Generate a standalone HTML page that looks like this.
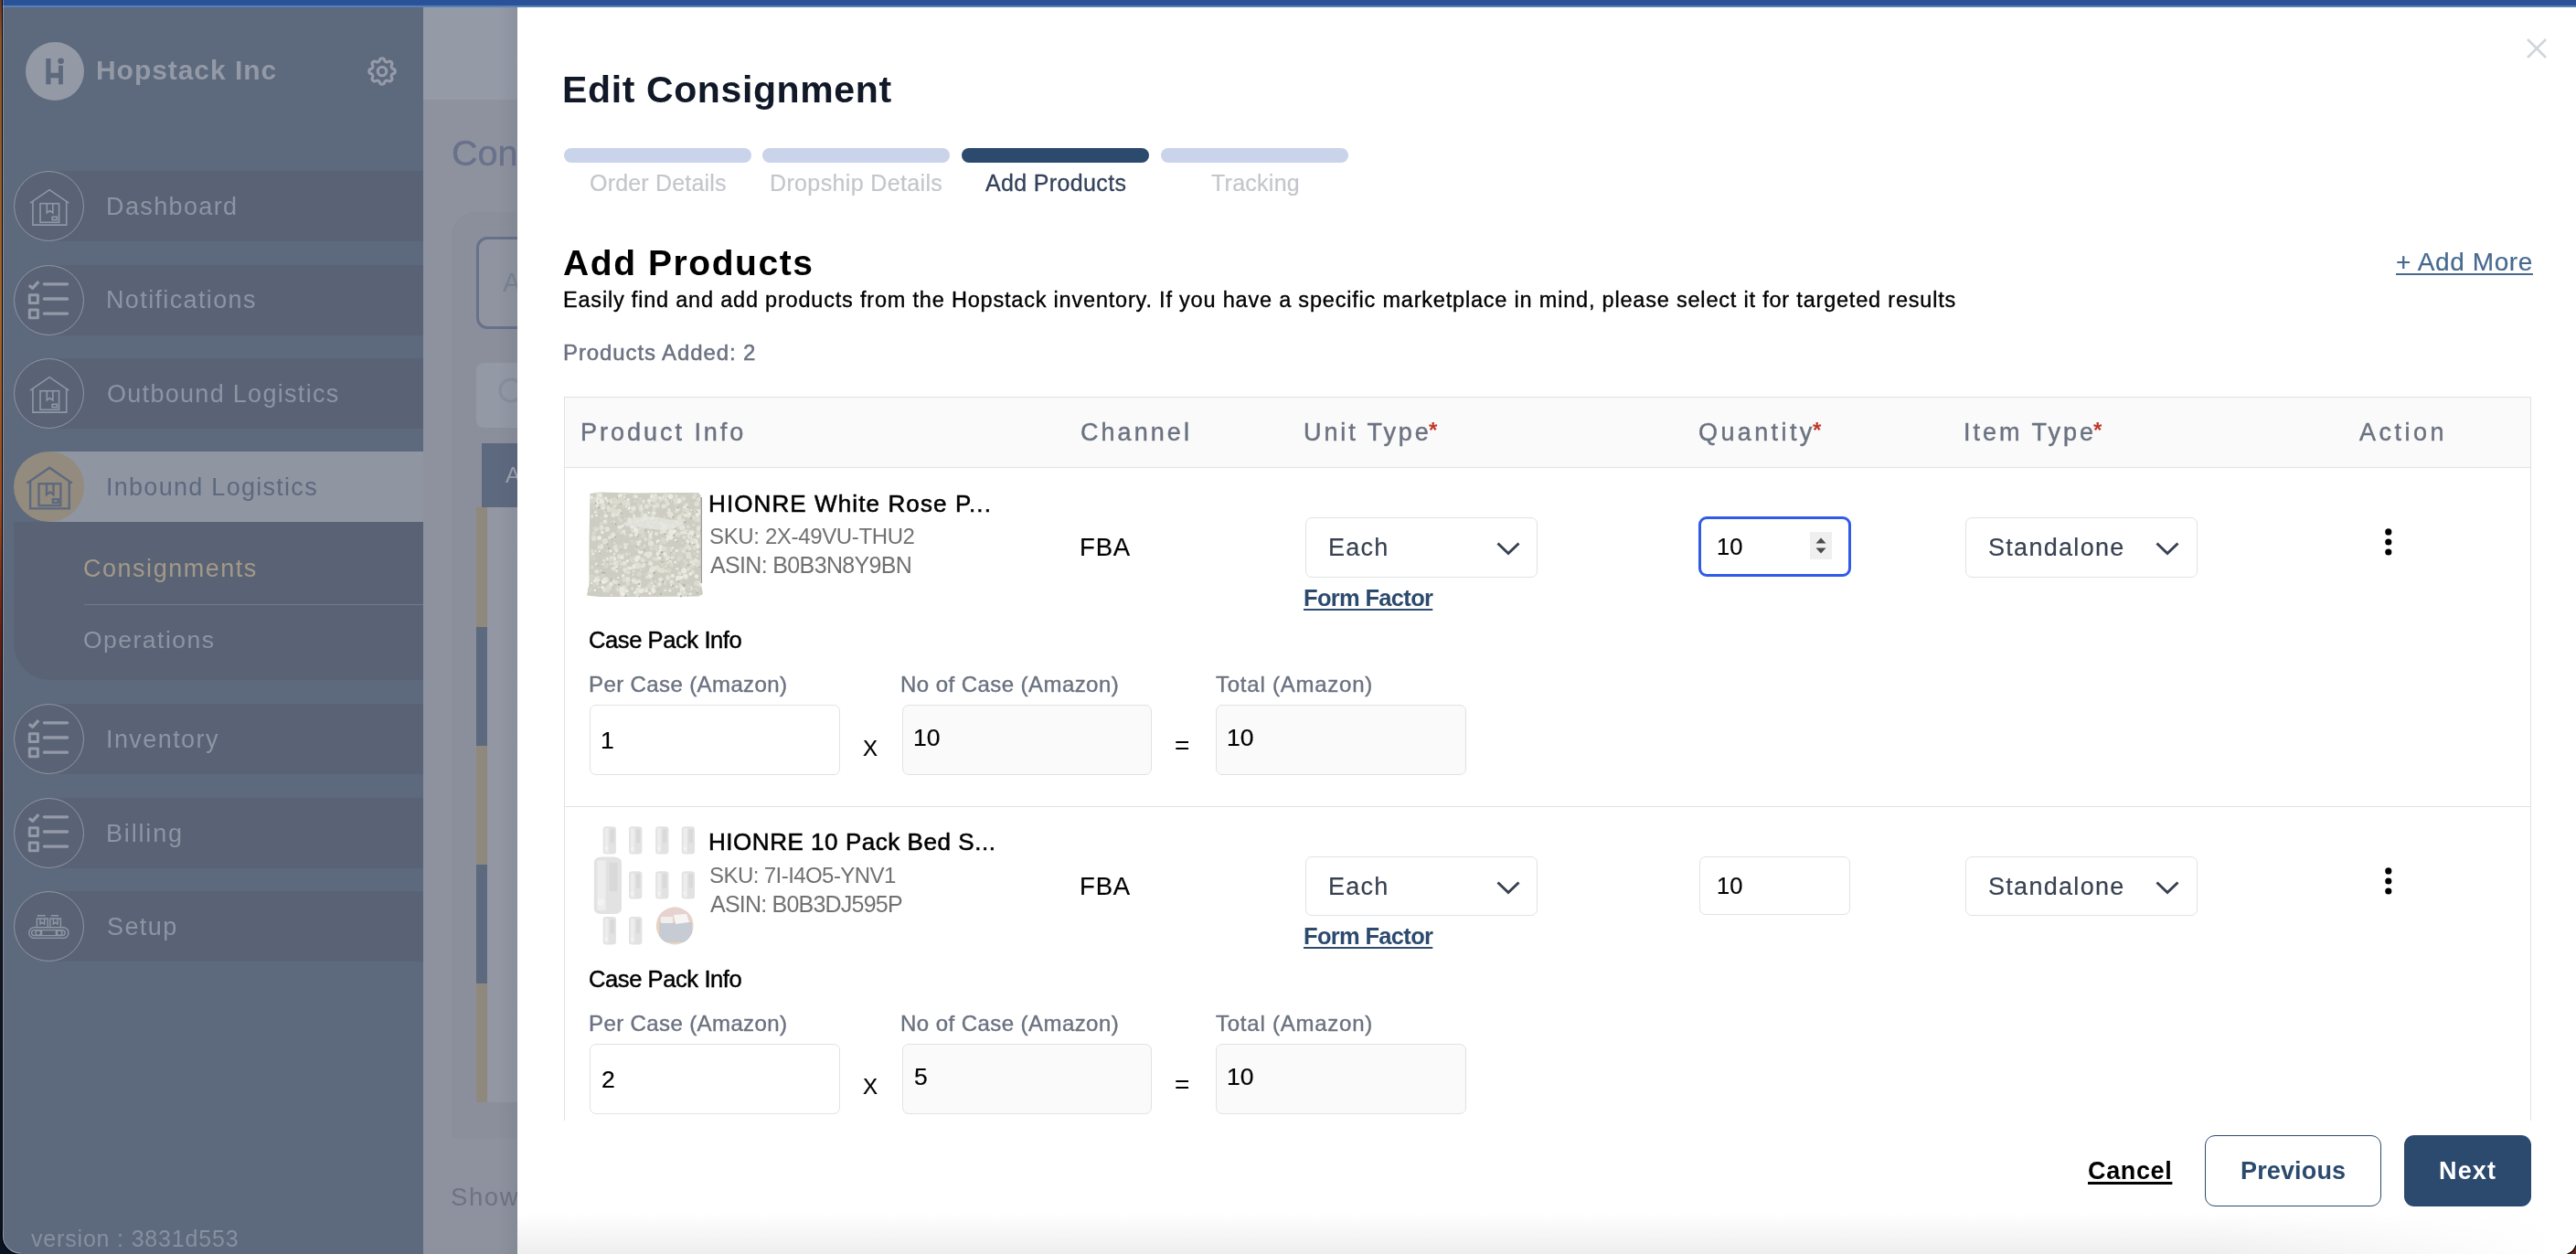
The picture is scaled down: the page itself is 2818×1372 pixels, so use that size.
<!DOCTYPE html>
<html lang="en"><head><meta charset="utf-8"><title>Edit Consignment</title>
<style>
html,body{margin:0;padding:0;}
body{width:2818px;height:1372px;position:relative;overflow:hidden;background:#8E929F;font-family:"Liberation Sans",sans-serif;}
#root{position:absolute;left:0;top:0;width:2818px;height:1372px;opacity:.999;}
.a{position:absolute;box-sizing:border-box;}
.t{position:absolute;white-space:nowrap;will-change:transform;}
svg{position:absolute;overflow:visible;}
</style></head><body><div id="root">
<div class="a" style="left:0.0px;top:0.0px;width:2818.0px;height:6.0px;background:#2A5298;"></div>
<div class="a" style="left:0.0px;top:6.0px;width:2818.0px;height:2.0px;background:#5580BA;"></div>
<div class="a" style="left:463.0px;top:8.0px;width:120.0px;height:101.0px;background:#959AA7;"></div>
<div class="a" style="left:463.0px;top:109.0px;width:120.0px;height:1263.0px;background:#8E929F;"></div>
<span class="t" style="left:493.8px;top:148.3px;font-size:39.5px;line-height:39.5px;color:#68728A;-webkit-text-stroke:0.5px #68728A;">Consignments</span>
<div class="a" style="left:495.0px;top:232.0px;width:200.0px;height:1014.0px;background:#8B8F9C;border-radius:25px 0 0 4px;border-left:1px solid #878C99;"></div>
<div class="a" style="left:521.0px;top:259.0px;width:200.0px;height:101.0px;border:3px solid #66718A;border-radius:12px;background:#8F94A0;"></div>
<span class="t" style="left:550.0px;top:295.2px;font-size:29.0px;line-height:29.0px;color:#7B8293;">All</span>
<div class="a" style="left:521.0px;top:397.0px;width:200.0px;height:71.0px;background:#9499A6;border-radius:8px;"></div>
<svg style="left:545px;top:413px" width="30" height="30"><circle cx="14" cy="14" r="12" fill="none" stroke="#898E9C" stroke-width="3.2"/></svg>
<div class="a" style="left:527.0px;top:484.6px;width:200.0px;height:70.2px;background:#5D697F;"></div>
<span class="t" style="left:553.0px;top:508.3px;font-size:24.5px;line-height:24.5px;color:#9EA3AF;">A</span>
<div class="a" style="left:533.0px;top:554.8px;width:100.0px;height:651.2px;background:#9297A3;"></div>
<div class="a" style="left:521.0px;top:554.8px;width:12.0px;height:130.8px;background:#8F887C;"></div>
<div class="a" style="left:521.0px;top:685.6px;width:12.0px;height:130.1px;background:#5D697F;"></div>
<div class="a" style="left:521.0px;top:815.7px;width:12.0px;height:130.3px;background:#8F887C;"></div>
<div class="a" style="left:521.0px;top:946.0px;width:12.0px;height:130.0px;background:#5D697F;"></div>
<div class="a" style="left:521.0px;top:1076.0px;width:12.0px;height:130.0px;background:#8F887C;"></div>
<span class="t" style="left:493.4px;top:1296.4px;font-size:27.5px;line-height:27.5px;color:#6D7383;letter-spacing:1.6px;">Showing</span>
<div class="a" style="left:4.0px;top:8.0px;width:459.0px;height:1364.0px;background:#5D697D;"></div>
<div class="a" style="left:0.0px;top:0.0px;width:1.5px;height:1372.0px;background:linear-gradient(#6B3A28 0,#8A5528 3%,#A0652A 25%,#9A4A20 40%,#6A1F14 50%,#3A1A16 60%,#101820 75%,#0A1420 100%);"></div>
<div class="a" style="left:1.5px;top:0.0px;width:1.0px;height:1372.0px;background:#050302;"></div>
<div class="a" style="left:2.5px;top:8.0px;width:1.5px;height:1364.0px;background:#8491A8;"></div>
<div class="a" style="left:2.5px;top:0.0px;width:1.5px;height:6.0px;background:#5B82C3;"></div>
<div class="a" style="left:2.5px;top:6.0px;width:1.5px;height:2.0px;background:#86A9DC;"></div>
<svg style="left:28px;top:46px" width="64" height="64" viewBox="0 0 64 64"><circle cx="32" cy="32" r="32" fill="#9499A6"/>
<path d="M22.3 17.9h5.2v28.3h-5.2zM36 25.8h4.9v20.4H36zM27 33.7h10v5.5H27z" fill="#5D697D"/><circle cx="38.6" cy="20.8" r="3.3" fill="#5D697D"/></svg>
<span class="t" style="left:104.8px;top:62.0px;font-size:30.0px;line-height:30.0px;color:#9499A6;font-weight:700;letter-spacing:0.95px;">Hopstack Inc</span>
<svg style="left:399px;top:59px" width="38" height="38" viewBox="0 0 24 24" fill="none" stroke="#959BA9" stroke-width="2" stroke-linecap="round" stroke-linejoin="round"><path d="M10.325 4.317c.426-1.756 2.924-1.756 3.35 0a1.724 1.724 0 002.573 1.066c1.543-.94 3.31.826 2.37 2.37a1.724 1.724 0 001.065 2.572c1.756.426 1.756 2.924 0 3.35a1.724 1.724 0 00-1.066 2.573c.94 1.543-.826 3.31-2.37 2.37a1.724 1.724 0 00-2.572 1.065c-.426 1.756-2.924 1.756-3.35 0a1.724 1.724 0 00-2.573-1.066c-1.543.94-3.31-.826-2.37-2.37a1.724 1.724 0 00-1.065-2.572c-1.756-.426-1.756-2.924 0-3.35a1.724 1.724 0 001.066-2.573c-.94-1.543.826-3.31 2.37-2.37.996.608 2.296.07 2.572-1.065z"/><path d="M15 12a3 3 0 11-6 0 3 3 0 016 0z"/></svg>
<div class="a" style="left:53.5px;top:187.0px;width:409.5px;height:77.0px;background:#5A6376;"></div>
<svg style="left:15px;top:187px" width="77" height="77" viewBox="0 0 77 77"><circle cx="38.5" cy="38.5" r="38" fill="#5A6376" stroke="#9096A4" stroke-width="1"/><g transform="translate(38.5 38.6) scale(1.0) translate(-38.5 -38.6)" fill="none" stroke="#9096A4" stroke-width="1.6" stroke-linejoin="miter">
<path d="M17.9 35.2 39.1 20.6 60.3 35.2"/><path d="M20.9 33v26.1h36.8V33"/>
<rect x="29" y="35.7" width="20.6" height="20.6"/><path d="M36.3 35.6v10.4l3.2-2.4 3.3 2.4V35.6"/><rect x="42.2" y="50.3" width="5.2" height="3.3"/></g></svg>
<span class="t" style="left:116.4px;top:212.7px;font-size:27.0px;line-height:27.0px;color:#8D94A3;letter-spacing:1.38px;">Dashboard</span>
<div class="a" style="left:53.5px;top:289.5px;width:409.5px;height:77.0px;background:#5A6376;"></div>
<svg style="left:15px;top:289.5px" width="77" height="77" viewBox="0 0 77 77"><circle cx="38.5" cy="38.5" r="38" fill="#5A6376" stroke="#9096A4" stroke-width="1"/><g fill="none" stroke="#9399A7" stroke-width="3" stroke-linejoin="round"><path d="M16.8 22.3l3.8 3 6.6-7.2" stroke-width="3.2"/>
<rect x="17.3" y="32.7" width="9.1" height="8.8"/><rect x="17.3" y="48.9" width="9.1" height="8.8"/>
<path d="M33.4 20.8h25.2M33.4 37h25.2M33.4 53.1h25.2" stroke-width="3.3" stroke-linecap="round"/></g></svg>
<span class="t" style="left:116.4px;top:315.2px;font-size:27.0px;line-height:27.0px;color:#8D94A3;letter-spacing:1.37px;">Notifications</span>
<div class="a" style="left:53.5px;top:392.0px;width:409.5px;height:77.0px;background:#5A6376;"></div>
<svg style="left:15px;top:392px" width="77" height="77" viewBox="0 0 77 77"><circle cx="38.5" cy="38.5" r="38" fill="#5A6376" stroke="#9096A4" stroke-width="1"/><g transform="translate(38.5 38.6) scale(1.0) translate(-38.5 -38.6)" fill="none" stroke="#9096A4" stroke-width="1.6" stroke-linejoin="miter">
<path d="M17.9 35.2 39.1 20.6 60.3 35.2"/><path d="M20.9 33v26.1h36.8V33"/>
<rect x="29" y="35.7" width="20.6" height="20.6"/><path d="M36.3 35.6v10.4l3.2-2.4 3.3 2.4V35.6"/><rect x="42.2" y="50.3" width="5.2" height="3.3"/></g></svg>
<span class="t" style="left:117.4px;top:417.7px;font-size:27.0px;line-height:27.0px;color:#8D94A3;letter-spacing:1.30px;">Outbound Logistics</span>
<div class="a" style="left:53.5px;top:494.0px;width:409.5px;height:77.0px;background:#9095A2;"></div>
<svg style="left:15px;top:494px" width="77" height="77" viewBox="0 0 77 77"><circle cx="38.5" cy="38.5" r="38.5" fill="#928B7E"/><g transform="translate(38.5 38.6) scale(1.16) translate(-38.5 -38.6)" fill="none" stroke="#5D697F" stroke-width="2.0" stroke-linejoin="miter">
<path d="M17.9 35.2 39.1 20.6 60.3 35.2"/><path d="M20.9 33v26.1h36.8V33"/>
<rect x="29" y="35.7" width="20.6" height="20.6"/><path d="M36.3 35.6v10.4l3.2-2.4 3.3 2.4V35.6"/><rect x="42.2" y="50.3" width="5.2" height="3.3"/></g></svg>
<span class="t" style="left:116.2px;top:519.7px;font-size:27.0px;line-height:27.0px;color:#5D697F;letter-spacing:1.28px;">Inbound Logistics</span>
<div class="a" style="left:53.5px;top:770.0px;width:409.5px;height:77.0px;background:#5A6376;"></div>
<svg style="left:15px;top:770px" width="77" height="77" viewBox="0 0 77 77"><circle cx="38.5" cy="38.5" r="38" fill="#5A6376" stroke="#9096A4" stroke-width="1"/><g fill="none" stroke="#9399A7" stroke-width="3" stroke-linejoin="round"><path d="M16.8 22.3l3.8 3 6.6-7.2" stroke-width="3.2"/>
<rect x="17.3" y="32.7" width="9.1" height="8.8"/><rect x="17.3" y="48.9" width="9.1" height="8.8"/>
<path d="M33.4 20.8h25.2M33.4 37h25.2M33.4 53.1h25.2" stroke-width="3.3" stroke-linecap="round"/></g></svg>
<span class="t" style="left:116.2px;top:795.7px;font-size:27.0px;line-height:27.0px;color:#8D94A3;letter-spacing:1.42px;">Inventory</span>
<div class="a" style="left:53.5px;top:873.0px;width:409.5px;height:77.0px;background:#5A6376;"></div>
<svg style="left:15px;top:873px" width="77" height="77" viewBox="0 0 77 77"><circle cx="38.5" cy="38.5" r="38" fill="#5A6376" stroke="#9096A4" stroke-width="1"/><g fill="none" stroke="#9399A7" stroke-width="3" stroke-linejoin="round"><path d="M16.8 22.3l3.8 3 6.6-7.2" stroke-width="3.2"/>
<rect x="17.3" y="32.7" width="9.1" height="8.8"/><rect x="17.3" y="48.9" width="9.1" height="8.8"/>
<path d="M33.4 20.8h25.2M33.4 37h25.2M33.4 53.1h25.2" stroke-width="3.3" stroke-linecap="round"/></g></svg>
<span class="t" style="left:116.4px;top:898.7px;font-size:27.0px;line-height:27.0px;color:#8D94A3;letter-spacing:1.84px;">Billing</span>
<div class="a" style="left:53.5px;top:975.0px;width:409.5px;height:77.0px;background:#5A6376;"></div>
<svg style="left:15px;top:975px" width="77" height="77" viewBox="0 0 77 77"><circle cx="38.5" cy="38.5" r="38" fill="#5A6376" stroke="#9096A4" stroke-width="1"/><g fill="none" stroke="#9096A4" stroke-width="1.4"><rect x="16.7" y="39.8" width="43.3" height="11.6" rx="5.8"/>
<rect x="19.6" y="42.6" width="36.6" height="6" rx="3"/><circle cx="26.8" cy="45.6" r="2.9"/><circle cx="50.1" cy="45.6" r="2.9"/>
<path d="M25.4 39.8V30h11.8v9.8M39.8 39.8V30h11.6v9.8M25.8 26.8h8.9M40.8 26.8h8.2"/>
<path d="M29 30v6l2.3-1.8 2.3 1.8V30M43.4 30v6l2.3-1.8 2.3 1.8V30"/><path d="M30.5 42.6v6M46.4 42.6v6"/></g></svg>
<span class="t" style="left:117.4px;top:1000.7px;font-size:27.0px;line-height:27.0px;color:#8D94A3;letter-spacing:1.41px;">Setup</span>
<div class="a" style="left:15.0px;top:571.0px;width:448.0px;height:173.4px;background:#5A6376;border-radius:0 0 0 40px;"></div>
<span class="t" style="left:90.7px;top:608.6px;font-size:27.0px;line-height:27.0px;color:#A39987;letter-spacing:1.52px;">Consignments</span>
<div class="a" style="left:92.0px;top:661.2px;width:371.0px;height:1.0px;background:#6B7A93;"></div>
<span class="t" style="left:90.8px;top:687.3px;font-size:26.5px;line-height:26.5px;color:#8D94A3;letter-spacing:1.49px;">Operations</span>
<span class="t" style="left:33.5px;top:1342.7px;font-size:25.0px;line-height:25.0px;color:#8790A1;letter-spacing:0.82px;">version : 3831d553</span>
<div class="a" style="left:546.0px;top:8.0px;width:20.0px;height:1364.0px;background:linear-gradient(90deg,rgba(60,66,82,0),rgba(60,66,82,.10));"></div>
<div class="a" style="left:566.0px;top:8.0px;width:2252.0px;height:1364.0px;background:#fff;"></div>
<div class="a" style="left:566.0px;top:1322.0px;width:2252.0px;height:50.0px;background:linear-gradient(90deg,rgba(255,255,255,0) 82%,#fff 99%),linear-gradient(#fff 10%,#EEEEEE);"></div>
<svg style="left:2764px;top:42px" width="22" height="22" viewBox="0 0 22 22"><path d="M1 1l20 20M21 1L1 21" stroke="#D1D5DB" stroke-width="2.6" fill="none"/></svg>
<span class="t" style="left:614.8px;top:77.8px;font-size:41.0px;line-height:41.0px;color:#111827;font-weight:700;letter-spacing:0.62px;">Edit Consignment</span>
<div class="a" style="left:617.0px;top:162.0px;width:205.0px;height:16.0px;background:#C9D3EA;border-radius:8px;"></div>
<span class="t" style="left:644.6px;top:188.0px;font-size:25.0px;line-height:25.0px;color:#C3C6CB;letter-spacing:0.19px;-webkit-text-stroke:0.2px #C3C6CB;">Order Details</span>
<div class="a" style="left:834.0px;top:162.0px;width:205.0px;height:16.0px;background:#C9D3EA;border-radius:8px;"></div>
<span class="t" style="left:841.5px;top:188.0px;font-size:25.0px;line-height:25.0px;color:#C3C6CB;letter-spacing:0.36px;-webkit-text-stroke:0.2px #C3C6CB;">Dropship Details</span>
<div class="a" style="left:1051.8px;top:162.0px;width:205.0px;height:16.0px;background:#2C4A6E;border-radius:8px;"></div>
<span class="t" style="left:1077.8px;top:188.0px;font-size:25.0px;line-height:25.0px;color:#33425B;letter-spacing:0.35px;-webkit-text-stroke:0.3px #33425B;">Add Products</span>
<div class="a" style="left:1270.0px;top:162.0px;width:205.0px;height:16.0px;background:#C9D3EA;border-radius:8px;"></div>
<span class="t" style="left:1324.7px;top:188.0px;font-size:25.0px;line-height:25.0px;color:#C3C6CB;letter-spacing:0.26px;-webkit-text-stroke:0.2px #C3C6CB;">Tracking</span>
<span class="t" style="left:616.0px;top:267.7px;font-size:39.0px;line-height:39.0px;color:#000;font-weight:700;letter-spacing:1.58px;">Add Products</span>
<span class="t" style="left:615.6px;top:317.0px;font-size:23.5px;line-height:23.5px;color:#000;letter-spacing:0.80px;-webkit-text-stroke:0.35px #000;">Easily find and add products from the Hopstack inventory. If you have a specific marketplace in mind, please select it for targeted results</span>
<span class="t" style="left:615.6px;top:374.4px;font-size:24.0px;line-height:24.0px;color:#6B7280;letter-spacing:0.89px;-webkit-text-stroke:0.5px #6B7280;">Products Added: 2</span>
<span class="t" style="left:2620.7px;top:272.8px;font-size:28.0px;line-height:28.0px;color:#46698E;letter-spacing:0.59px;-webkit-text-stroke:0.2px #46698E;text-decoration:underline;text-decoration-thickness:2px;text-underline-offset:3px;">+ Add More</span>
<div class="a" style="left:617.0px;top:434.0px;width:2152.0px;height:792.0px;border:1px solid #E1E2E4;border-bottom:none;"></div>
<div class="a" style="left:618.0px;top:435.0px;width:2150.0px;height:77.0px;background:#FAFAFA;border-bottom:1px solid #E1E2E4;"></div>
<span class="t" style="left:635.4px;top:459.8px;font-size:27.0px;line-height:27.0px;color:#6B7280;letter-spacing:2.98px;-webkit-text-stroke:0.45px #6B7280;">Product Info</span>
<span class="t" style="left:1181.7px;top:459.8px;font-size:27.0px;line-height:27.0px;color:#6B7280;letter-spacing:3.05px;-webkit-text-stroke:0.45px #6B7280;">Channel</span>
<span class="t" style="left:1426.0px;top:459.8px;font-size:27.0px;line-height:27.0px;color:#6B7280;letter-spacing:2.90px;-webkit-text-stroke:0.45px #6B7280;">Unit Type</span>
<span class="t" style="left:1562.5px;top:459.0px;font-size:24.0px;line-height:24.0px;color:#C0392B;font-weight:700;">*</span>
<span class="t" style="left:1858.0px;top:459.8px;font-size:27.0px;line-height:27.0px;color:#6B7280;letter-spacing:3.39px;-webkit-text-stroke:0.45px #6B7280;">Quantity</span>
<span class="t" style="left:1983.2px;top:459.0px;font-size:24.0px;line-height:24.0px;color:#C0392B;font-weight:700;">*</span>
<span class="t" style="left:2148.0px;top:459.8px;font-size:27.0px;line-height:27.0px;color:#6B7280;letter-spacing:3.01px;-webkit-text-stroke:0.45px #6B7280;">Item Type</span>
<span class="t" style="left:2289.9px;top:459.0px;font-size:24.0px;line-height:24.0px;color:#C0392B;font-weight:700;">*</span>
<span class="t" style="left:2581.0px;top:459.8px;font-size:27.0px;line-height:27.0px;color:#6B7280;letter-spacing:3.50px;-webkit-text-stroke:0.45px #6B7280;">Action</span>
<span class="t" style="left:774.9px;top:537.7px;font-size:26.0px;line-height:26.0px;color:#000;letter-spacing:1.11px;-webkit-text-stroke:0.55px #000;">HIONRE White Rose P...</span>
<span class="t" style="left:775.9px;top:575.1px;font-size:24.0px;line-height:24.0px;color:#717171;letter-spacing:-0.36px;">SKU: 2X-49VU-THU2</span>
<span class="t" style="left:777.0px;top:606.0px;font-size:25.0px;line-height:25.0px;color:#717171;letter-spacing:-0.65px;">ASIN: B0B3N8Y9BN</span>
<span class="t" style="left:1180.8px;top:584.9px;font-size:27.5px;line-height:27.5px;color:#000;letter-spacing:0.84px;-webkit-text-stroke:0.2px #000;">FBA</span>
<div class="a" style="left:1428.0px;top:566.4px;width:254.0px;height:65.2px;border:1px solid #E1E2E4;border-radius:7px;background:#fff;"></div>
<span class="t" style="left:1452.8px;top:586.1px;font-size:27.0px;line-height:27.0px;color:#374151;letter-spacing:1.28px;-webkit-text-stroke:0.2px #374151;">Each</span>
<svg style="left:1636.8px;top:593px" width="26" height="15" viewBox="0 0 26 15"><path d="M1.5 1.5l11.5 11 11.5-11" fill="none" stroke="#374151" stroke-width="3"/></svg>
<span class="t" style="left:1426.3px;top:641.7px;font-size:25.5px;line-height:25.5px;color:#2C4A6E;font-weight:700;letter-spacing:-0.68px;text-decoration:underline;text-decoration-thickness:2px;text-underline-offset:3px;">Form Factor</span>
<div class="a" style="left:1858.0px;top:564.8px;width:167.0px;height:66.6px;border:3px solid #2F5BE7;border-radius:9px;background:#fff;"></div>
<div class="a" style="left:1980.0px;top:582.3px;width:24.0px;height:29.5px;background:#EFEFEF;"></div>
<svg style="left:1980px;top:582.3px" width="24" height="30" viewBox="0 0 24 30"><path d="M6.5 12.5L12 6.5l5.5 6zM6.5 17.5L12 23.5l5.5-6z" fill="#4A4A4A"/></svg>
<span class="t" style="left:1877.5px;top:586.1px;font-size:25.5px;line-height:25.5px;color:#000;-webkit-text-stroke:0.2px #000;">10</span>
<div class="a" style="left:2150.0px;top:566.4px;width:253.5px;height:65.2px;border:1px solid #E1E2E4;border-radius:7px;background:#fff;"></div>
<span class="t" style="left:2175.2px;top:586.1px;font-size:27.0px;line-height:27.0px;color:#374151;letter-spacing:1.30px;-webkit-text-stroke:0.2px #374151;">Standalone</span>
<svg style="left:2358px;top:593px" width="26" height="15" viewBox="0 0 26 15"><path d="M1.5 1.5l11.5 11 11.5-11" fill="none" stroke="#374151" stroke-width="3"/></svg>
<svg style="left:2606px;top:575px" width="14" height="36" viewBox="0 0 14 36"><circle cx="6.8" cy="6.9" r="3.6"/><circle cx="6.8" cy="18" r="3.6"/><circle cx="6.8" cy="29" r="3.6"/></svg>
<span class="t" style="left:644.1px;top:688.3px;font-size:25.5px;line-height:25.5px;color:#000;letter-spacing:-0.40px;-webkit-text-stroke:0.45px #000;">Case Pack Info</span>
<span class="t" style="left:643.5px;top:737.4px;font-size:24.0px;line-height:24.0px;color:#6B7280;letter-spacing:0.39px;-webkit-text-stroke:0.4px #6B7280;">Per Case (Amazon)</span>
<span class="t" style="left:985.1px;top:737.4px;font-size:24.0px;line-height:24.0px;color:#6B7280;letter-spacing:0.44px;-webkit-text-stroke:0.4px #6B7280;">No of Case (Amazon)</span>
<span class="t" style="left:1329.7px;top:737.4px;font-size:24.0px;line-height:24.0px;color:#6B7280;letter-spacing:0.76px;-webkit-text-stroke:0.4px #6B7280;">Total (Amazon)</span>
<div class="a" style="left:645.4px;top:771.3px;width:273.3px;height:77.0px;border:1px solid #E1E2E4;border-radius:7px;background:#fff;"></div>
<div class="a" style="left:987.0px;top:771.3px;width:273.0px;height:77.0px;border:1px solid #E1E2E4;border-radius:7px;background:#FAFAFA;"></div>
<div class="a" style="left:1330.2px;top:771.3px;width:273.6px;height:77.0px;border:1px solid #E1E2E4;border-radius:7px;background:#FAFAFA;"></div>
<span class="t" style="left:657.0px;top:797.0px;font-size:26.5px;line-height:26.5px;color:#000;-webkit-text-stroke:0.2px #000;">1</span>
<span class="t" style="left:999.0px;top:794.3px;font-size:26.5px;line-height:26.5px;color:#000;-webkit-text-stroke:0.2px #000;">10</span>
<span class="t" style="left:1341.8px;top:794.3px;font-size:26.5px;line-height:26.5px;color:#000;-webkit-text-stroke:0.2px #000;">10</span>
<span class="t" style="left:944.2px;top:806.8px;font-size:24.0px;line-height:24.0px;color:#000;-webkit-text-stroke:0.2px #000;">X</span>
<span class="t" style="left:1285.0px;top:802.0px;font-size:28.0px;line-height:28.0px;color:#000;-webkit-text-stroke:0.2px #000;">=</span>
<div class="a" style="left:618.0px;top:881.6px;width:2150.0px;height:1.0px;background:#E1E2E4;"></div>
<span class="t" style="left:774.9px;top:908.3px;font-size:26.0px;line-height:26.0px;color:#000;letter-spacing:0.54px;-webkit-text-stroke:0.55px #000;">HIONRE 10 Pack Bed S...</span>
<span class="t" style="left:775.9px;top:945.7px;font-size:24.0px;line-height:24.0px;color:#717171;letter-spacing:-0.57px;">SKU: 7I-I4O5-YNV1</span>
<span class="t" style="left:777.0px;top:976.6px;font-size:25.0px;line-height:25.0px;color:#717171;letter-spacing:-0.78px;">ASIN: B0B3DJ595P</span>
<span class="t" style="left:1180.8px;top:955.5px;font-size:27.5px;line-height:27.5px;color:#000;letter-spacing:0.84px;-webkit-text-stroke:0.2px #000;">FBA</span>
<div class="a" style="left:1428.0px;top:937.0px;width:254.0px;height:65.2px;border:1px solid #E1E2E4;border-radius:7px;background:#fff;"></div>
<span class="t" style="left:1452.8px;top:956.7px;font-size:27.0px;line-height:27.0px;color:#374151;letter-spacing:1.28px;-webkit-text-stroke:0.2px #374151;">Each</span>
<svg style="left:1636.8px;top:963.6px" width="26" height="15" viewBox="0 0 26 15"><path d="M1.5 1.5l11.5 11 11.5-11" fill="none" stroke="#374151" stroke-width="3"/></svg>
<span class="t" style="left:1426.3px;top:1012.3px;font-size:25.5px;line-height:25.5px;color:#2C4A6E;font-weight:700;letter-spacing:-0.68px;text-decoration:underline;text-decoration-thickness:2px;text-underline-offset:3px;">Form Factor</span>
<div class="a" style="left:1859.0px;top:937.0px;width:165.0px;height:64.0px;border:1px solid #E1E2E4;border-radius:7px;background:#fff;"></div>
<span class="t" style="left:1877.5px;top:956.7px;font-size:25.5px;line-height:25.5px;color:#000;-webkit-text-stroke:0.2px #000;">10</span>
<div class="a" style="left:2150.0px;top:937.0px;width:253.5px;height:65.2px;border:1px solid #E1E2E4;border-radius:7px;background:#fff;"></div>
<span class="t" style="left:2175.2px;top:956.7px;font-size:27.0px;line-height:27.0px;color:#374151;letter-spacing:1.30px;-webkit-text-stroke:0.2px #374151;">Standalone</span>
<svg style="left:2358px;top:963.6px" width="26" height="15" viewBox="0 0 26 15"><path d="M1.5 1.5l11.5 11 11.5-11" fill="none" stroke="#374151" stroke-width="3"/></svg>
<svg style="left:2606px;top:945.6px" width="14" height="36" viewBox="0 0 14 36"><circle cx="6.8" cy="6.9" r="3.6"/><circle cx="6.8" cy="18" r="3.6"/><circle cx="6.8" cy="29" r="3.6"/></svg>
<span class="t" style="left:644.1px;top:1058.9px;font-size:25.5px;line-height:25.5px;color:#000;letter-spacing:-0.40px;-webkit-text-stroke:0.45px #000;">Case Pack Info</span>
<span class="t" style="left:643.5px;top:1108.0px;font-size:24.0px;line-height:24.0px;color:#6B7280;letter-spacing:0.39px;-webkit-text-stroke:0.4px #6B7280;">Per Case (Amazon)</span>
<span class="t" style="left:985.1px;top:1108.0px;font-size:24.0px;line-height:24.0px;color:#6B7280;letter-spacing:0.44px;-webkit-text-stroke:0.4px #6B7280;">No of Case (Amazon)</span>
<span class="t" style="left:1329.7px;top:1108.0px;font-size:24.0px;line-height:24.0px;color:#6B7280;letter-spacing:0.76px;-webkit-text-stroke:0.4px #6B7280;">Total (Amazon)</span>
<div class="a" style="left:645.4px;top:1141.9px;width:273.3px;height:77.0px;border:1px solid #E1E2E4;border-radius:7px;background:#fff;"></div>
<div class="a" style="left:987.0px;top:1141.9px;width:273.0px;height:77.0px;border:1px solid #E1E2E4;border-radius:7px;background:#FAFAFA;"></div>
<div class="a" style="left:1330.2px;top:1141.9px;width:273.6px;height:77.0px;border:1px solid #E1E2E4;border-radius:7px;background:#FAFAFA;"></div>
<span class="t" style="left:657.7px;top:1167.6px;font-size:26.5px;line-height:26.5px;color:#000;-webkit-text-stroke:0.2px #000;">2</span>
<span class="t" style="left:999.9px;top:1164.9px;font-size:26.5px;line-height:26.5px;color:#000;-webkit-text-stroke:0.2px #000;">5</span>
<span class="t" style="left:1341.8px;top:1164.9px;font-size:26.5px;line-height:26.5px;color:#000;-webkit-text-stroke:0.2px #000;">10</span>
<span class="t" style="left:944.2px;top:1177.4px;font-size:24.0px;line-height:24.0px;color:#000;-webkit-text-stroke:0.2px #000;">X</span>
<span class="t" style="left:1285.0px;top:1172.6px;font-size:28.0px;line-height:28.0px;color:#000;-webkit-text-stroke:0.2px #000;">=</span>
<div class="a" style="left:566.0px;top:1225.5px;width:2252.0px;height:96.5px;background:#fff;"></div>
<span class="t" style="left:2283.5px;top:1267.8px;font-size:27.0px;line-height:27.0px;color:#000;font-weight:700;letter-spacing:0.64px;text-decoration:underline;text-decoration-thickness:2.5px;text-underline-offset:3px;">Cancel</span>
<div class="a" style="left:2412.0px;top:1242.0px;width:192.7px;height:77.8px;border:1.5px solid #2C4A6E;border-radius:11px;background:#fff;"></div>
<span class="t" style="left:2451.0px;top:1267.8px;font-size:27.0px;line-height:27.0px;color:#2C4A6E;font-weight:700;letter-spacing:0.14px;">Previous</span>
<div class="a" style="left:2630.2px;top:1242.0px;width:138.6px;height:77.8px;background:#2C4A6E;border-radius:11px;"></div>
<span class="t" style="left:2668.2px;top:1267.8px;font-size:27.0px;line-height:27.0px;color:#fff;font-weight:700;letter-spacing:1.17px;">Next</span>
<svg style="left:636px;top:532px" width="140" height="128" viewBox="0 0 140 128"><path d="M9.5 8 L20 6.5 L60 7.5 L98 7 L128 7 L130.5 10 L130.5 105 L133 118 L128 120.5 L70 121 L20 121 L6 119.5 L8.5 107 L8.5 60 Z" fill="#CDCDC3"/><circle cx="64.8" cy="71.1" r="3.1" fill="#EAEAE2"/><circle cx="30.7" cy="99.9" r="2.3" fill="#CDCDC2"/><circle cx="32.8" cy="101.9" r="0.8" fill="#ABAC9F"/><circle cx="17.8" cy="100.5" r="2.7" fill="#DCDCD2"/><circle cx="64.9" cy="92.2" r="2.6" fill="#CDCDC2"/><circle cx="64.9" cy="91.5" r="0.8" fill="#F2F2EC"/><circle cx="63.3" cy="104.4" r="2.4" fill="#E0E0D6"/><circle cx="62.5" cy="103.7" r="1.0" fill="#F2F2EC"/><circle cx="77.7" cy="114.9" r="1.6" fill="#D3D3C8"/><circle cx="77.2" cy="114.6" r="0.7" fill="#F2F2EC"/><circle cx="58.1" cy="104.9" r="2.2" fill="#DCDCD2"/><circle cx="60.0" cy="106.8" r="0.7" fill="#ABAC9F"/><circle cx="124.3" cy="60.5" r="3.2" fill="#EAEAE2"/><circle cx="31.8" cy="84.6" r="2.1" fill="#D3D3C8"/><circle cx="32.5" cy="85.1" r="0.8" fill="#F2F2EC"/><circle cx="19.1" cy="12.1" r="2.9" fill="#E4E4DB"/><circle cx="21.7" cy="14.6" r="0.9" fill="#ABAC9F"/><circle cx="60.5" cy="50.3" r="2.2" fill="#E4E4DB"/><circle cx="61.1" cy="51.0" r="1.0" fill="#F2F2EC"/><circle cx="81.0" cy="10.0" r="1.7" fill="#EAEAE2"/><circle cx="81.4" cy="9.7" r="0.8" fill="#F2F2EC"/><circle cx="82.6" cy="11.5" r="0.6" fill="#ABAC9F"/><circle cx="81.8" cy="33.7" r="2.5" fill="#D3D3C8"/><circle cx="84.0" cy="35.9" r="0.9" fill="#ABAC9F"/><circle cx="114.2" cy="21.0" r="2.2" fill="#E0E0D6"/><circle cx="114.9" cy="21.5" r="0.8" fill="#F2F2EC"/><circle cx="116.1" cy="23.0" r="1.0" fill="#ABAC9F"/><circle cx="128.3" cy="28.2" r="3.1" fill="#EAEAE2"/><circle cx="19.5" cy="9.6" r="3.1" fill="#E4E4DB"/><circle cx="60.7" cy="111.8" r="2.3" fill="#CDCDC2"/><circle cx="61.1" cy="111.1" r="0.8" fill="#F2F2EC"/><circle cx="116.8" cy="77.5" r="2.0" fill="#E4E4DB"/><circle cx="118.6" cy="79.3" r="0.8" fill="#ABAC9F"/><circle cx="38.4" cy="10.5" r="2.0" fill="#CDCDC2"/><circle cx="40.2" cy="12.3" r="0.8" fill="#ABAC9F"/><circle cx="91.4" cy="86.6" r="2.5" fill="#E4E4DB"/><circle cx="67.7" cy="47.2" r="2.0" fill="#DCDCD2"/><circle cx="67.9" cy="47.2" r="1.1" fill="#F2F2EC"/><circle cx="77.0" cy="92.0" r="3.0" fill="#E0E0D6"/><circle cx="79.7" cy="94.7" r="1.1" fill="#ABAC9F"/><circle cx="50.4" cy="15.0" r="2.3" fill="#DCDCD2"/><circle cx="108.8" cy="106.9" r="2.5" fill="#CDCDC2"/><circle cx="17.8" cy="18.6" r="1.9" fill="#EAEAE2"/><circle cx="101.6" cy="73.6" r="2.2" fill="#D8D8CD"/><circle cx="72.9" cy="41.6" r="1.6" fill="#DCDCD2"/><circle cx="73.2" cy="41.6" r="1.0" fill="#F2F2EC"/><circle cx="45.1" cy="85.0" r="1.8" fill="#E4E4DB"/><circle cx="126.9" cy="63.8" r="1.9" fill="#EAEAE2"/><circle cx="128.7" cy="65.5" r="0.8" fill="#ABAC9F"/><circle cx="110.8" cy="112.9" r="3.0" fill="#EAEAE2"/><circle cx="111.5" cy="112.4" r="0.8" fill="#F2F2EC"/><circle cx="122.4" cy="9.8" r="1.6" fill="#D3D3C8"/><circle cx="123.9" cy="11.2" r="0.8" fill="#ABAC9F"/><circle cx="126.3" cy="103.0" r="2.2" fill="#CDCDC2"/><circle cx="64.8" cy="13.8" r="1.6" fill="#D8D8CD"/><circle cx="42.5" cy="46.8" r="2.6" fill="#CDCDC2"/><circle cx="42.0" cy="46.7" r="0.7" fill="#F2F2EC"/><circle cx="36.9" cy="21.6" r="1.6" fill="#E0E0D6"/><circle cx="36.2" cy="21.7" r="1.0" fill="#F2F2EC"/><circle cx="16.1" cy="28.4" r="2.9" fill="#D3D3C8"/><circle cx="15.4" cy="28.3" r="1.1" fill="#F2F2EC"/><circle cx="18.7" cy="31.0" r="0.7" fill="#ABAC9F"/><circle cx="50.9" cy="87.3" r="2.4" fill="#CDCDC2"/><circle cx="53.1" cy="89.4" r="1.0" fill="#ABAC9F"/><circle cx="97.0" cy="31.4" r="2.2" fill="#E0E0D6"/><circle cx="31.6" cy="109.7" r="1.5" fill="#CDCDC2"/><circle cx="109.6" cy="116.4" r="2.3" fill="#E0E0D6"/><circle cx="111.6" cy="118.5" r="1.0" fill="#ABAC9F"/><circle cx="109.8" cy="114.1" r="1.7" fill="#E4E4DB"/><circle cx="108.8" cy="42.8" r="3.0" fill="#D8D8CD"/><circle cx="108.8" cy="42.1" r="0.9" fill="#F2F2EC"/><circle cx="41.8" cy="113.5" r="1.9" fill="#D8D8CD"/><circle cx="42.3" cy="113.0" r="0.9" fill="#F2F2EC"/><circle cx="24.3" cy="22.5" r="2.4" fill="#E0E0D6"/><circle cx="63.2" cy="108.8" r="2.5" fill="#E0E0D6"/><circle cx="62.8" cy="108.9" r="0.8" fill="#F2F2EC"/><circle cx="89.1" cy="66.7" r="2.9" fill="#CDCDC2"/><circle cx="89.3" cy="67.4" r="1.1" fill="#F2F2EC"/><circle cx="45.6" cy="21.7" r="2.4" fill="#D3D3C8"/><circle cx="47.8" cy="23.8" r="0.9" fill="#ABAC9F"/><circle cx="71.4" cy="76.4" r="1.5" fill="#DCDCD2"/><circle cx="110.1" cy="71.4" r="2.3" fill="#E0E0D6"/><circle cx="110.8" cy="71.4" r="1.2" fill="#F2F2EC"/><circle cx="58.5" cy="34.1" r="2.3" fill="#D3D3C8"/><circle cx="123.1" cy="61.2" r="2.0" fill="#E4E4DB"/><circle cx="124.9" cy="63.1" r="0.7" fill="#ABAC9F"/><circle cx="100.1" cy="33.8" r="2.3" fill="#EAEAE2"/><circle cx="102.2" cy="36.0" r="0.9" fill="#ABAC9F"/><circle cx="38.6" cy="28.3" r="2.4" fill="#EAEAE2"/><circle cx="38.8" cy="28.9" r="1.0" fill="#F2F2EC"/><circle cx="118.3" cy="68.0" r="1.9" fill="#E4E4DB"/><circle cx="117.4" cy="32.5" r="2.8" fill="#D8D8CD"/><circle cx="116.9" cy="32.6" r="1.1" fill="#F2F2EC"/><circle cx="119.9" cy="34.9" r="1.0" fill="#ABAC9F"/><circle cx="31.3" cy="16.4" r="3.0" fill="#E4E4DB"/><circle cx="18.6" cy="103.2" r="2.2" fill="#D8D8CD"/><circle cx="20.6" cy="105.2" r="0.9" fill="#ABAC9F"/><circle cx="109.9" cy="16.3" r="2.5" fill="#D3D3C8"/><circle cx="21.0" cy="64.7" r="2.8" fill="#CDCDC2"/><circle cx="110.4" cy="61.9" r="1.5" fill="#D8D8CD"/><circle cx="79.9" cy="22.3" r="1.8" fill="#E4E4DB"/><circle cx="79.4" cy="21.9" r="1.0" fill="#F2F2EC"/><circle cx="23.5" cy="85.4" r="1.6" fill="#DCDCD2"/><circle cx="23.4" cy="85.4" r="0.9" fill="#F2F2EC"/><circle cx="115.8" cy="26.4" r="2.3" fill="#E0E0D6"/><circle cx="84.6" cy="16.2" r="2.8" fill="#D3D3C8"/><circle cx="97.6" cy="106.6" r="2.6" fill="#EAEAE2"/><circle cx="99.9" cy="108.9" r="0.9" fill="#ABAC9F"/><circle cx="50.3" cy="95.0" r="2.0" fill="#DCDCD2"/><circle cx="111.9" cy="52.9" r="3.0" fill="#CDCDC2"/><circle cx="105.5" cy="52.9" r="2.7" fill="#DCDCD2"/><circle cx="19.1" cy="109.8" r="3.2" fill="#CDCDC2"/><circle cx="18.7" cy="110.5" r="0.8" fill="#F2F2EC"/><circle cx="22.0" cy="112.7" r="0.8" fill="#ABAC9F"/><circle cx="29.7" cy="14.1" r="2.4" fill="#EAEAE2"/><circle cx="102.0" cy="35.3" r="2.2" fill="#DCDCD2"/><circle cx="41.8" cy="45.2" r="2.4" fill="#EAEAE2"/><circle cx="111.2" cy="14.0" r="2.5" fill="#D8D8CD"/><circle cx="128.0" cy="50.5" r="3.1" fill="#D8D8CD"/><circle cx="13.6" cy="116.5" r="2.2" fill="#CDCDC2"/><circle cx="75.0" cy="62.0" r="2.0" fill="#D3D3C8"/><circle cx="82.2" cy="79.7" r="2.2" fill="#E0E0D6"/><circle cx="103.3" cy="10.9" r="3.2" fill="#D3D3C8"/><circle cx="103.9" cy="10.8" r="0.9" fill="#F2F2EC"/><circle cx="37.7" cy="66.8" r="3.1" fill="#E0E0D6"/><circle cx="40.5" cy="69.5" r="1.1" fill="#ABAC9F"/><circle cx="37.9" cy="88.4" r="1.6" fill="#EAEAE2"/><circle cx="39.3" cy="89.8" r="0.6" fill="#ABAC9F"/><circle cx="74.7" cy="19.7" r="2.3" fill="#E0E0D6"/><circle cx="89.1" cy="85.5" r="2.1" fill="#E0E0D6"/><circle cx="37.0" cy="18.4" r="3.0" fill="#D8D8CD"/><circle cx="41.7" cy="77.0" r="2.7" fill="#E0E0D6"/><circle cx="103.9" cy="27.4" r="1.9" fill="#E0E0D6"/><circle cx="11.1" cy="12.2" r="2.0" fill="#EAEAE2"/><circle cx="10.4" cy="11.7" r="0.8" fill="#F2F2EC"/><circle cx="124.7" cy="24.0" r="1.9" fill="#D3D3C8"/><circle cx="50.0" cy="63.3" r="1.7" fill="#D8D8CD"/><circle cx="49.4" cy="63.8" r="1.0" fill="#F2F2EC"/><circle cx="33.7" cy="55.1" r="1.9" fill="#D8D8CD"/><circle cx="33.2" cy="55.6" r="1.0" fill="#F2F2EC"/><circle cx="104.7" cy="102.5" r="1.8" fill="#E0E0D6"/><circle cx="106.3" cy="104.1" r="1.0" fill="#ABAC9F"/><circle cx="16.2" cy="14.8" r="2.5" fill="#EAEAE2"/><circle cx="46.3" cy="112.5" r="2.5" fill="#E0E0D6"/><circle cx="46.7" cy="112.8" r="0.8" fill="#F2F2EC"/><circle cx="48.6" cy="114.7" r="0.8" fill="#ABAC9F"/><circle cx="100.4" cy="48.2" r="1.7" fill="#E0E0D6"/><circle cx="123.3" cy="86.1" r="2.0" fill="#CDCDC2"/><circle cx="47.3" cy="52.2" r="3.1" fill="#CDCDC2"/><circle cx="47.1" cy="51.9" r="0.9" fill="#F2F2EC"/><circle cx="56.4" cy="28.0" r="2.5" fill="#D8D8CD"/><circle cx="58.6" cy="30.2" r="0.9" fill="#ABAC9F"/><circle cx="29.0" cy="15.6" r="2.3" fill="#D8D8CD"/><circle cx="28.3" cy="15.6" r="1.0" fill="#F2F2EC"/><circle cx="110.6" cy="12.6" r="2.4" fill="#D8D8CD"/><circle cx="41.6" cy="17.4" r="2.0" fill="#DCDCD2"/><circle cx="43.4" cy="19.3" r="1.0" fill="#ABAC9F"/><circle cx="90.4" cy="34.0" r="1.9" fill="#D8D8CD"/><circle cx="65.7" cy="46.4" r="2.9" fill="#D3D3C8"/><circle cx="75.9" cy="90.1" r="2.7" fill="#DCDCD2"/><circle cx="92.7" cy="105.7" r="2.9" fill="#D8D8CD"/><circle cx="92.6" cy="105.8" r="0.7" fill="#F2F2EC"/><circle cx="126.1" cy="113.0" r="1.9" fill="#E4E4DB"/><circle cx="27.8" cy="29.1" r="2.2" fill="#D3D3C8"/><circle cx="28.4" cy="29.1" r="1.1" fill="#F2F2EC"/><circle cx="26.2" cy="113.5" r="3.1" fill="#D8D8CD"/><circle cx="124.2" cy="9.3" r="1.7" fill="#E4E4DB"/><circle cx="84.0" cy="60.7" r="2.4" fill="#EAEAE2"/><circle cx="83.7" cy="60.2" r="1.1" fill="#F2F2EC"/><circle cx="77.3" cy="101.4" r="2.3" fill="#D3D3C8"/><circle cx="106.3" cy="15.9" r="3.0" fill="#EAEAE2"/><circle cx="107.0" cy="16.4" r="0.9" fill="#F2F2EC"/><circle cx="73.1" cy="37.4" r="3.2" fill="#E0E0D6"/><circle cx="119.6" cy="111.8" r="2.3" fill="#E4E4DB"/><circle cx="26.4" cy="23.5" r="2.0" fill="#D3D3C8"/><circle cx="23.0" cy="92.5" r="2.6" fill="#CDCDC2"/><circle cx="25.3" cy="94.8" r="1.0" fill="#ABAC9F"/><circle cx="116.0" cy="102.0" r="1.6" fill="#D3D3C8"/><circle cx="121.7" cy="86.9" r="1.6" fill="#E0E0D6"/><circle cx="45.5" cy="98.1" r="2.2" fill="#E0E0D6"/><circle cx="46.0" cy="97.7" r="1.0" fill="#F2F2EC"/><circle cx="26.5" cy="103.2" r="2.0" fill="#D3D3C8"/><circle cx="14.7" cy="13.8" r="1.7" fill="#E0E0D6"/><circle cx="55.0" cy="88.8" r="1.9" fill="#CDCDC2"/><circle cx="55.5" cy="89.4" r="1.1" fill="#F2F2EC"/><circle cx="123.2" cy="23.0" r="2.6" fill="#CDCDC2"/><circle cx="104.1" cy="70.6" r="1.6" fill="#E4E4DB"/><circle cx="104.5" cy="70.3" r="1.2" fill="#F2F2EC"/><circle cx="100.1" cy="44.1" r="2.9" fill="#DCDCD2"/><circle cx="100.3" cy="43.5" r="1.0" fill="#F2F2EC"/><circle cx="102.7" cy="46.8" r="0.7" fill="#ABAC9F"/><circle cx="97.5" cy="16.9" r="1.6" fill="#DCDCD2"/><circle cx="50.4" cy="102.1" r="3.1" fill="#E4E4DB"/><circle cx="112.7" cy="50.5" r="2.1" fill="#EAEAE2"/><circle cx="85.7" cy="42.5" r="2.8" fill="#E4E4DB"/><circle cx="50.5" cy="81.8" r="1.7" fill="#EAEAE2"/><circle cx="50.2" cy="81.5" r="0.8" fill="#F2F2EC"/><circle cx="39.0" cy="68.6" r="2.0" fill="#E4E4DB"/><circle cx="24.4" cy="89.2" r="3.2" fill="#CDCDC2"/><circle cx="127.7" cy="71.9" r="1.5" fill="#E0E0D6"/><circle cx="127.0" cy="71.5" r="1.0" fill="#F2F2EC"/><circle cx="48.8" cy="114.6" r="2.1" fill="#EAEAE2"/><circle cx="100.9" cy="33.2" r="2.5" fill="#CDCDC2"/><circle cx="40.4" cy="112.3" r="3.2" fill="#D8D8CD"/><circle cx="39.8" cy="113.0" r="0.7" fill="#F2F2EC"/><circle cx="53.3" cy="94.5" r="2.1" fill="#E4E4DB"/><circle cx="53.3" cy="93.8" r="0.7" fill="#F2F2EC"/><circle cx="55.2" cy="96.4" r="1.1" fill="#ABAC9F"/><circle cx="128.1" cy="82.7" r="2.0" fill="#E0E0D6"/><circle cx="86.0" cy="80.6" r="2.8" fill="#E4E4DB"/><circle cx="85.9" cy="80.0" r="0.9" fill="#F2F2EC"/><circle cx="28.6" cy="66.3" r="1.9" fill="#CDCDC2"/><circle cx="30.3" cy="68.1" r="1.0" fill="#ABAC9F"/><circle cx="99.8" cy="97.9" r="2.2" fill="#EAEAE2"/><circle cx="59.5" cy="78.6" r="2.7" fill="#D8D8CD"/><circle cx="121.6" cy="59.7" r="3.0" fill="#E0E0D6"/><circle cx="79.6" cy="111.8" r="2.4" fill="#CDCDC2"/><circle cx="44.5" cy="77.7" r="2.2" fill="#EAEAE2"/><circle cx="45.6" cy="75.0" r="1.6" fill="#DCDCD2"/><circle cx="67.8" cy="17.4" r="3.0" fill="#CDCDC2"/><circle cx="67.7" cy="17.0" r="0.7" fill="#F2F2EC"/><circle cx="118.6" cy="54.7" r="2.9" fill="#E4E4DB"/><circle cx="21.9" cy="13.5" r="2.4" fill="#E4E4DB"/><circle cx="22.0" cy="14.2" r="0.7" fill="#F2F2EC"/><circle cx="44.9" cy="43.3" r="1.6" fill="#EAEAE2"/><circle cx="52.3" cy="74.1" r="1.6" fill="#DCDCD2"/><circle cx="48.2" cy="21.9" r="2.8" fill="#D8D8CD"/><circle cx="50.7" cy="24.4" r="0.7" fill="#ABAC9F"/><circle cx="125.9" cy="110.8" r="1.8" fill="#D8D8CD"/><circle cx="96.7" cy="71.1" r="2.4" fill="#E4E4DB"/><circle cx="97.3" cy="70.3" r="0.8" fill="#F2F2EC"/><circle cx="46.7" cy="111.2" r="3.0" fill="#E0E0D6"/><circle cx="60.0" cy="25.0" r="3.0" fill="#DCDCD2"/><circle cx="62.6" cy="27.7" r="0.7" fill="#ABAC9F"/><circle cx="36.6" cy="83.4" r="2.8" fill="#D3D3C8"/><circle cx="21.0" cy="65.9" r="3.2" fill="#E4E4DB"/><circle cx="89.2" cy="15.6" r="3.2" fill="#EAEAE2"/><circle cx="92.0" cy="18.5" r="1.1" fill="#ABAC9F"/><circle cx="75.8" cy="55.0" r="2.5" fill="#E4E4DB"/><circle cx="76.3" cy="54.6" r="0.8" fill="#F2F2EC"/><circle cx="30.2" cy="110.8" r="3.2" fill="#DCDCD2"/><circle cx="121.9" cy="12.1" r="1.6" fill="#D8D8CD"/><circle cx="91.6" cy="97.4" r="2.4" fill="#CDCDC2"/><circle cx="75.1" cy="75.1" r="2.8" fill="#DCDCD2"/><circle cx="63.3" cy="96.2" r="2.8" fill="#D8D8CD"/><circle cx="76.7" cy="105.6" r="2.5" fill="#D3D3C8"/><circle cx="76.9" cy="106.0" r="1.0" fill="#F2F2EC"/><circle cx="29.4" cy="22.9" r="1.5" fill="#EAEAE2"/><circle cx="100.0" cy="106.1" r="1.6" fill="#DCDCD2"/><circle cx="76.6" cy="98.4" r="1.9" fill="#E4E4DB"/><circle cx="76.5" cy="98.7" r="1.1" fill="#F2F2EC"/><circle cx="107.5" cy="95.3" r="2.3" fill="#E0E0D6"/><circle cx="109.6" cy="97.4" r="0.7" fill="#ABAC9F"/><circle cx="26.8" cy="86.5" r="2.9" fill="#D8D8CD"/><circle cx="66.7" cy="87.4" r="2.7" fill="#DCDCD2"/><circle cx="67.1" cy="87.6" r="0.8" fill="#F2F2EC"/><circle cx="74.3" cy="15.8" r="2.4" fill="#EAEAE2"/><circle cx="76.5" cy="18.0" r="0.6" fill="#ABAC9F"/><circle cx="101.4" cy="32.1" r="1.9" fill="#CDCDC2"/><circle cx="17.2" cy="31.8" r="2.0" fill="#CDCDC2"/><circle cx="16.6" cy="32.0" r="1.2" fill="#F2F2EC"/><circle cx="79.8" cy="112.6" r="3.0" fill="#E4E4DB"/><circle cx="115.6" cy="50.0" r="2.8" fill="#E4E4DB"/><circle cx="109.1" cy="99.9" r="2.3" fill="#EAEAE2"/><circle cx="109.1" cy="99.6" r="0.9" fill="#F2F2EC"/><circle cx="94.3" cy="106.8" r="1.8" fill="#EAEAE2"/><circle cx="96.0" cy="108.5" r="0.7" fill="#ABAC9F"/><circle cx="73.5" cy="92.5" r="2.4" fill="#CDCDC2"/><circle cx="40.9" cy="47.6" r="1.8" fill="#D8D8CD"/><circle cx="100.0" cy="112.0" r="1.5" fill="#D3D3C8"/><circle cx="117.1" cy="50.0" r="1.9" fill="#CDCDC2"/><circle cx="85.0" cy="62.6" r="1.8" fill="#CDCDC2"/><circle cx="86.7" cy="64.3" r="0.8" fill="#ABAC9F"/><circle cx="61.1" cy="69.2" r="1.7" fill="#E0E0D6"/><circle cx="64.7" cy="49.5" r="3.0" fill="#D8D8CD"/><circle cx="65.1" cy="49.3" r="0.9" fill="#F2F2EC"/><circle cx="35.4" cy="39.5" r="2.1" fill="#E4E4DB"/><circle cx="35.9" cy="39.9" r="0.9" fill="#F2F2EC"/><circle cx="37.3" cy="41.3" r="1.0" fill="#ABAC9F"/><circle cx="102.6" cy="82.9" r="1.6" fill="#D8D8CD"/><circle cx="102.9" cy="83.2" r="1.2" fill="#F2F2EC"/><circle cx="36.5" cy="79.6" r="1.7" fill="#EAEAE2"/><circle cx="36.5" cy="79.6" r="1.2" fill="#F2F2EC"/><circle cx="97.4" cy="31.2" r="3.1" fill="#E4E4DB"/><circle cx="100.2" cy="33.9" r="0.9" fill="#ABAC9F"/><circle cx="37.2" cy="16.0" r="2.1" fill="#EAEAE2"/><circle cx="39.4" cy="105.6" r="2.0" fill="#DCDCD2"/><circle cx="41.2" cy="107.5" r="1.1" fill="#ABAC9F"/><circle cx="124.6" cy="37.1" r="2.1" fill="#D8D8CD"/><circle cx="48.3" cy="34.9" r="1.5" fill="#D3D3C8"/><circle cx="48.1" cy="34.6" r="1.1" fill="#F2F2EC"/><circle cx="89.5" cy="50.4" r="2.1" fill="#D3D3C8"/><circle cx="89.8" cy="49.9" r="0.7" fill="#F2F2EC"/><circle cx="91.4" cy="52.2" r="0.9" fill="#ABAC9F"/><circle cx="85.7" cy="12.5" r="1.6" fill="#EAEAE2"/><circle cx="124.2" cy="9.5" r="1.7" fill="#CDCDC2"/><circle cx="124.2" cy="9.5" r="0.7" fill="#F2F2EC"/><circle cx="41.1" cy="35.5" r="1.9" fill="#CDCDC2"/><circle cx="41.1" cy="35.3" r="0.8" fill="#F2F2EC"/><circle cx="90.5" cy="69.7" r="2.6" fill="#CDCDC2"/><circle cx="109.6" cy="36.2" r="1.7" fill="#DCDCD2"/><circle cx="109.9" cy="36.5" r="1.0" fill="#F2F2EC"/><circle cx="113.2" cy="23.8" r="2.6" fill="#EAEAE2"/><circle cx="59.9" cy="48.3" r="2.6" fill="#EAEAE2"/><circle cx="59.5" cy="48.0" r="0.8" fill="#F2F2EC"/><circle cx="22.4" cy="12.5" r="1.6" fill="#DCDCD2"/><circle cx="116.4" cy="65.5" r="2.7" fill="#DCDCD2"/><circle cx="117.0" cy="66.0" r="0.7" fill="#F2F2EC"/><circle cx="72.0" cy="99.0" r="2.2" fill="#E0E0D6"/><circle cx="94.8" cy="26.7" r="3.0" fill="#E4E4DB"/><circle cx="79.8" cy="54.6" r="2.7" fill="#CDCDC2"/><circle cx="26.9" cy="28.7" r="2.6" fill="#D3D3C8"/><circle cx="26.4" cy="27.9" r="1.0" fill="#F2F2EC"/><circle cx="95.4" cy="54.5" r="2.6" fill="#EAEAE2"/><circle cx="24.0" cy="23.6" r="3.2" fill="#D8D8CD"/><circle cx="23.7" cy="23.9" r="1.2" fill="#F2F2EC"/><circle cx="26.9" cy="26.4" r="0.8" fill="#ABAC9F"/><circle cx="68.8" cy="49.1" r="2.0" fill="#D8D8CD"/><circle cx="35.1" cy="90.2" r="2.2" fill="#E4E4DB"/><circle cx="96.2" cy="69.4" r="2.9" fill="#E4E4DB"/><circle cx="78.3" cy="110.8" r="3.0" fill="#EAEAE2"/><circle cx="78.0" cy="110.0" r="1.0" fill="#F2F2EC"/><circle cx="81.0" cy="113.5" r="0.9" fill="#ABAC9F"/><circle cx="41.6" cy="31.9" r="2.3" fill="#D3D3C8"/><circle cx="104.9" cy="84.1" r="1.5" fill="#D3D3C8"/><circle cx="32.3" cy="107.3" r="2.3" fill="#EAEAE2"/><circle cx="78.5" cy="30.4" r="2.5" fill="#D8D8CD"/><circle cx="128.1" cy="107.0" r="3.2" fill="#EAEAE2"/><circle cx="12.1" cy="106.2" r="3.1" fill="#CDCDC2"/><circle cx="11.4" cy="105.9" r="1.1" fill="#F2F2EC"/><circle cx="33.3" cy="118.2" r="1.5" fill="#CDCDC2"/><circle cx="32.9" cy="118.9" r="0.9" fill="#F2F2EC"/><circle cx="75.1" cy="83.6" r="2.9" fill="#D8D8CD"/><circle cx="75.8" cy="83.4" r="1.1" fill="#F2F2EC"/><circle cx="81.0" cy="31.8" r="2.2" fill="#D3D3C8"/><circle cx="64.5" cy="41.8" r="1.6" fill="#E0E0D6"/><circle cx="63.8" cy="41.6" r="1.1" fill="#F2F2EC"/><circle cx="65.9" cy="43.3" r="1.0" fill="#ABAC9F"/><circle cx="77.0" cy="85.3" r="1.8" fill="#DCDCD2"/><circle cx="76.8" cy="84.8" r="0.7" fill="#F2F2EC"/><circle cx="12.8" cy="16.2" r="3.1" fill="#D8D8CD"/><circle cx="15.6" cy="19.0" r="1.0" fill="#ABAC9F"/><circle cx="47.7" cy="94.0" r="1.7" fill="#D3D3C8"/><circle cx="34.6" cy="53.2" r="2.7" fill="#E4E4DB"/><circle cx="37.0" cy="55.6" r="0.8" fill="#ABAC9F"/><circle cx="125.7" cy="109.0" r="2.8" fill="#CDCDC2"/><circle cx="128.3" cy="111.6" r="0.9" fill="#ABAC9F"/><circle cx="55.2" cy="81.0" r="1.9" fill="#CDCDC2"/><circle cx="55.1" cy="81.3" r="0.9" fill="#F2F2EC"/><circle cx="126.2" cy="19.3" r="2.8" fill="#E0E0D6"/><circle cx="60.5" cy="50.4" r="1.9" fill="#CDCDC2"/><circle cx="62.2" cy="52.1" r="1.1" fill="#ABAC9F"/><circle cx="74.7" cy="58.3" r="2.0" fill="#DCDCD2"/><circle cx="25.8" cy="60.3" r="3.2" fill="#E0E0D6"/><circle cx="28.6" cy="63.2" r="0.8" fill="#ABAC9F"/><circle cx="77.7" cy="11.2" r="3.1" fill="#D8D8CD"/><circle cx="36.4" cy="104.1" r="2.6" fill="#E4E4DB"/><circle cx="14.4" cy="107.7" r="2.7" fill="#D3D3C8"/><circle cx="61.5" cy="62.7" r="3.1" fill="#E4E4DB"/><circle cx="61.6" cy="63.2" r="0.9" fill="#F2F2EC"/><circle cx="110.0" cy="105.9" r="2.8" fill="#CDCDC2"/><circle cx="112.5" cy="108.4" r="1.1" fill="#ABAC9F"/><circle cx="111.5" cy="26.1" r="2.1" fill="#D3D3C8"/><circle cx="113.4" cy="27.9" r="0.7" fill="#ABAC9F"/><circle cx="60.1" cy="77.5" r="1.6" fill="#E0E0D6"/><circle cx="32.9" cy="79.2" r="3.0" fill="#E0E0D6"/><circle cx="112.2" cy="87.6" r="2.9" fill="#D3D3C8"/><circle cx="114.8" cy="90.2" r="0.7" fill="#ABAC9F"/><circle cx="105.6" cy="25.2" r="2.5" fill="#DCDCD2"/><circle cx="105.0" cy="25.9" r="1.0" fill="#F2F2EC"/><circle cx="95.9" cy="91.9" r="2.1" fill="#D3D3C8"/><circle cx="97.8" cy="93.8" r="0.6" fill="#ABAC9F"/><circle cx="40.6" cy="49.2" r="2.5" fill="#D3D3C8"/><circle cx="128.4" cy="45.9" r="2.7" fill="#E4E4DB"/><circle cx="130.8" cy="48.3" r="0.7" fill="#ABAC9F"/><circle cx="120.0" cy="117.3" r="1.6" fill="#E0E0D6"/><circle cx="56.4" cy="92.7" r="2.5" fill="#EAEAE2"/><circle cx="49.3" cy="73.9" r="2.6" fill="#D3D3C8"/><circle cx="49.6" cy="74.2" r="0.8" fill="#F2F2EC"/><circle cx="23.2" cy="110.7" r="1.9" fill="#EAEAE2"/><circle cx="22.5" cy="111.3" r="1.1" fill="#F2F2EC"/><circle cx="24.9" cy="112.4" r="0.9" fill="#ABAC9F"/><circle cx="64.9" cy="29.7" r="2.8" fill="#DCDCD2"/><circle cx="93.0" cy="45.6" r="3.0" fill="#D8D8CD"/><circle cx="93.2" cy="45.5" r="0.9" fill="#F2F2EC"/><circle cx="47.1" cy="84.2" r="2.5" fill="#E4E4DB"/><circle cx="57.4" cy="102.8" r="2.6" fill="#E0E0D6"/><circle cx="56.7" cy="103.6" r="1.0" fill="#F2F2EC"/><circle cx="127.2" cy="66.1" r="2.5" fill="#EAEAE2"/><circle cx="129.4" cy="68.4" r="0.8" fill="#ABAC9F"/><circle cx="102.4" cy="14.9" r="1.8" fill="#E0E0D6"/><circle cx="123.8" cy="83.3" r="3.1" fill="#EAEAE2"/><circle cx="126.6" cy="86.1" r="0.8" fill="#ABAC9F"/><circle cx="128.8" cy="110.7" r="1.5" fill="#D3D3C8"/><circle cx="79.3" cy="13.0" r="1.9" fill="#E0E0D6"/><circle cx="79.3" cy="12.7" r="1.1" fill="#F2F2EC"/><circle cx="59.8" cy="11.4" r="1.9" fill="#EAEAE2"/><circle cx="59.2" cy="10.8" r="1.1" fill="#F2F2EC"/><circle cx="71.5" cy="22.0" r="2.5" fill="#E4E4DB"/><circle cx="26.0" cy="101.6" r="2.7" fill="#E0E0D6"/><circle cx="86.4" cy="52.8" r="2.3" fill="#CDCDC2"/><circle cx="12.0" cy="54.1" r="1.6" fill="#D3D3C8"/><circle cx="60.5" cy="110.7" r="1.8" fill="#CDCDC2"/><circle cx="71.1" cy="111.7" r="2.2" fill="#D3D3C8"/><circle cx="71.3" cy="111.2" r="0.7" fill="#F2F2EC"/><circle cx="56.0" cy="81.5" r="2.1" fill="#DCDCD2"/><circle cx="56.5" cy="80.8" r="1.0" fill="#F2F2EC"/><circle cx="58.0" cy="31.3" r="1.7" fill="#D3D3C8"/><circle cx="57.7" cy="32.0" r="1.0" fill="#F2F2EC"/><circle cx="101.3" cy="49.1" r="2.5" fill="#DCDCD2"/><circle cx="101.5" cy="49.8" r="0.9" fill="#F2F2EC"/><circle cx="54.0" cy="40.5" r="2.5" fill="#CDCDC2"/><circle cx="53.5" cy="39.9" r="1.1" fill="#F2F2EC"/><circle cx="117.3" cy="30.2" r="2.5" fill="#D8D8CD"/><circle cx="117.8" cy="52.5" r="2.0" fill="#E0E0D6"/><circle cx="117.6" cy="52.0" r="0.8" fill="#F2F2EC"/><circle cx="119.6" cy="54.3" r="0.7" fill="#ABAC9F"/><circle cx="26.3" cy="38.7" r="2.0" fill="#D8D8CD"/><circle cx="16.9" cy="21.3" r="2.1" fill="#E0E0D6"/><circle cx="17.6" cy="21.7" r="1.0" fill="#F2F2EC"/><circle cx="18.8" cy="23.2" r="1.0" fill="#ABAC9F"/><circle cx="60.4" cy="85.2" r="3.2" fill="#D8D8CD"/><circle cx="60.8" cy="85.1" r="1.1" fill="#F2F2EC"/><circle cx="64.2" cy="56.6" r="1.7" fill="#D3D3C8"/><circle cx="114.6" cy="117.9" r="2.1" fill="#D8D8CD"/><circle cx="116.5" cy="119.8" r="0.7" fill="#ABAC9F"/><circle cx="46.3" cy="117.6" r="2.5" fill="#D8D8CD"/><circle cx="46.2" cy="117.6" r="1.1" fill="#F2F2EC"/><circle cx="48.5" cy="119.8" r="1.0" fill="#ABAC9F"/><circle cx="62.2" cy="49.5" r="2.6" fill="#EAEAE2"/><circle cx="56.4" cy="96.9" r="1.7" fill="#E0E0D6"/><circle cx="113.0" cy="81.9" r="2.1" fill="#D8D8CD"/><circle cx="80.7" cy="104.4" r="2.1" fill="#CDCDC2"/><circle cx="81.0" cy="104.2" r="0.7" fill="#F2F2EC"/><circle cx="88.2" cy="46.4" r="2.2" fill="#DCDCD2"/><circle cx="87.5" cy="46.9" r="0.9" fill="#F2F2EC"/><circle cx="62.3" cy="77.9" r="2.5" fill="#EAEAE2"/><circle cx="69.3" cy="32.3" r="2.8" fill="#DCDCD2"/><circle cx="51.8" cy="23.8" r="2.3" fill="#EAEAE2"/><circle cx="52.5" cy="24.3" r="1.1" fill="#F2F2EC"/><circle cx="53.9" cy="25.9" r="1.0" fill="#ABAC9F"/><circle cx="34.4" cy="28.5" r="2.4" fill="#CDCDC2"/><circle cx="33.9" cy="28.0" r="0.8" fill="#F2F2EC"/><circle cx="53.9" cy="43.3" r="1.7" fill="#D8D8CD"/><circle cx="117.5" cy="90.8" r="2.0" fill="#E4E4DB"/><circle cx="119.2" cy="92.5" r="1.0" fill="#ABAC9F"/><circle cx="92.8" cy="38.8" r="2.5" fill="#D3D3C8"/><circle cx="43.1" cy="37.8" r="2.4" fill="#D8D8CD"/><circle cx="76.8" cy="20.4" r="1.7" fill="#D8D8CD"/><circle cx="91.8" cy="113.5" r="2.8" fill="#D3D3C8"/><circle cx="91.7" cy="113.9" r="1.0" fill="#F2F2EC"/><circle cx="68.5" cy="86.0" r="2.1" fill="#E4E4DB"/><circle cx="79.6" cy="46.2" r="1.9" fill="#CDCDC2"/><circle cx="80.3" cy="46.4" r="0.7" fill="#F2F2EC"/><circle cx="19.3" cy="71.7" r="1.7" fill="#D3D3C8"/><circle cx="19.9" cy="71.0" r="1.0" fill="#F2F2EC"/><circle cx="20.8" cy="73.3" r="0.6" fill="#ABAC9F"/><circle cx="95.1" cy="105.9" r="2.8" fill="#CDCDC2"/><circle cx="94.3" cy="15.2" r="2.7" fill="#CDCDC2"/><circle cx="96.7" cy="17.6" r="1.0" fill="#ABAC9F"/><circle cx="60.2" cy="62.3" r="1.6" fill="#EAEAE2"/><circle cx="60.9" cy="63.0" r="0.7" fill="#F2F2EC"/><circle cx="39.3" cy="30.9" r="2.0" fill="#E4E4DB"/><circle cx="126.3" cy="106.3" r="3.1" fill="#DCDCD2"/><circle cx="122.8" cy="42.3" r="1.8" fill="#D8D8CD"/><circle cx="119.0" cy="117.9" r="1.5" fill="#DCDCD2"/><circle cx="118.5" cy="118.1" r="1.1" fill="#F2F2EC"/><circle cx="93.2" cy="14.8" r="2.1" fill="#D8D8CD"/><circle cx="93.0" cy="14.4" r="0.9" fill="#F2F2EC"/><circle cx="95.1" cy="16.7" r="0.8" fill="#ABAC9F"/><circle cx="122.8" cy="33.5" r="1.6" fill="#D3D3C8"/><circle cx="93.7" cy="58.7" r="1.9" fill="#EAEAE2"/><circle cx="93.2" cy="58.3" r="0.9" fill="#F2F2EC"/><circle cx="49.3" cy="33.1" r="2.6" fill="#D3D3C8"/><circle cx="46.4" cy="12.8" r="2.4" fill="#E0E0D6"/><circle cx="108.7" cy="68.7" r="1.6" fill="#D8D8CD"/><circle cx="11.8" cy="70.7" r="1.7" fill="#E0E0D6"/><circle cx="23.6" cy="98.2" r="2.8" fill="#D3D3C8"/><circle cx="26.2" cy="100.7" r="1.1" fill="#ABAC9F"/><circle cx="79.1" cy="116.4" r="1.6" fill="#D8D8CD"/><circle cx="80.5" cy="117.8" r="0.6" fill="#ABAC9F"/><circle cx="26.6" cy="13.0" r="1.8" fill="#EAEAE2"/><circle cx="50.4" cy="114.8" r="1.7" fill="#E0E0D6"/><circle cx="49.7" cy="114.4" r="1.1" fill="#F2F2EC"/><circle cx="116.4" cy="109.5" r="2.6" fill="#D3D3C8"/><circle cx="118.8" cy="111.9" r="0.7" fill="#ABAC9F"/><circle cx="128.1" cy="13.5" r="1.8" fill="#D3D3C8"/><circle cx="129.7" cy="15.1" r="0.8" fill="#ABAC9F"/><circle cx="81.7" cy="37.3" r="2.4" fill="#D8D8CD"/><circle cx="74.5" cy="116.8" r="1.6" fill="#E4E4DB"/><circle cx="75.2" cy="117.5" r="1.2" fill="#F2F2EC"/><circle cx="89.0" cy="17.4" r="2.3" fill="#CDCDC2"/><circle cx="116.0" cy="59.9" r="1.8" fill="#EAEAE2"/><circle cx="117.6" cy="61.5" r="1.0" fill="#ABAC9F"/><circle cx="58.1" cy="11.1" r="1.8" fill="#E4E4DB"/><circle cx="61.1" cy="118.5" r="2.5" fill="#DCDCD2"/><circle cx="63.4" cy="120.7" r="0.6" fill="#ABAC9F"/><circle cx="45.6" cy="9.9" r="1.9" fill="#CDCDC2"/><circle cx="38.6" cy="92.7" r="1.8" fill="#E4E4DB"/><circle cx="60.2" cy="68.7" r="2.3" fill="#D3D3C8"/><circle cx="94.1" cy="78.4" r="3.0" fill="#E0E0D6"/><circle cx="94.1" cy="79.2" r="0.8" fill="#F2F2EC"/><circle cx="96.8" cy="81.1" r="1.0" fill="#ABAC9F"/><circle cx="36.6" cy="73.9" r="1.8" fill="#D3D3C8"/><circle cx="35.9" cy="74.2" r="0.9" fill="#F2F2EC"/><circle cx="70.6" cy="113.9" r="2.4" fill="#EAEAE2"/><circle cx="58.1" cy="63.7" r="2.9" fill="#CDCDC2"/><circle cx="60.8" cy="66.4" r="0.8" fill="#ABAC9F"/><circle cx="68.6" cy="80.7" r="3.1" fill="#D3D3C8"/><circle cx="71.5" cy="83.5" r="0.7" fill="#ABAC9F"/><circle cx="12.6" cy="73.8" r="2.2" fill="#DCDCD2"/><circle cx="13.2" cy="73.8" r="0.9" fill="#F2F2EC"/><circle cx="68.7" cy="39.3" r="2.9" fill="#CDCDC2"/><circle cx="90.1" cy="86.4" r="2.3" fill="#D3D3C8"/><circle cx="95.1" cy="99.1" r="2.7" fill="#D8D8CD"/><circle cx="95.7" cy="98.5" r="0.9" fill="#F2F2EC"/><circle cx="11.7" cy="100.4" r="3.1" fill="#E0E0D6"/><circle cx="12.2" cy="100.6" r="1.2" fill="#F2F2EC"/><circle cx="89.8" cy="12.6" r="2.6" fill="#DCDCD2"/><circle cx="89.4" cy="12.4" r="0.8" fill="#F2F2EC"/><circle cx="106.7" cy="35.9" r="2.7" fill="#E0E0D6"/><circle cx="107.1" cy="35.1" r="1.1" fill="#F2F2EC"/><circle cx="108.1" cy="108.1" r="2.5" fill="#EAEAE2"/><circle cx="56.0" cy="46.7" r="1.5" fill="#E4E4DB"/><circle cx="36.0" cy="78.0" r="1.7" fill="#E4E4DB"/><circle cx="41.5" cy="27.1" r="2.6" fill="#E0E0D6"/><circle cx="43.8" cy="29.4" r="0.8" fill="#ABAC9F"/><circle cx="75.3" cy="73.5" r="2.0" fill="#EAEAE2"/><circle cx="42.3" cy="66.7" r="2.3" fill="#DCDCD2"/><circle cx="42.6" cy="65.9" r="1.1" fill="#F2F2EC"/><circle cx="43.5" cy="115.1" r="2.1" fill="#EAEAE2"/><circle cx="42.8" cy="114.4" r="0.9" fill="#F2F2EC"/><circle cx="59.9" cy="53.0" r="1.9" fill="#EAEAE2"/><circle cx="61.6" cy="54.7" r="0.8" fill="#ABAC9F"/><circle cx="67.9" cy="54.1" r="2.6" fill="#D8D8CD"/><circle cx="123.3" cy="34.6" r="2.4" fill="#DCDCD2"/><circle cx="125.5" cy="36.8" r="1.0" fill="#ABAC9F"/><circle cx="13.4" cy="22.7" r="2.4" fill="#D3D3C8"/><circle cx="127.5" cy="36.6" r="2.9" fill="#DCDCD2"/><circle cx="62.2" cy="17.6" r="2.3" fill="#D3D3C8"/><circle cx="64.3" cy="19.7" r="0.6" fill="#ABAC9F"/><circle cx="41.0" cy="86.9" r="2.2" fill="#E4E4DB"/><circle cx="108.0" cy="33.9" r="2.9" fill="#E4E4DB"/><circle cx="12.0" cy="88.8" r="1.7" fill="#DCDCD2"/><circle cx="55.8" cy="92.7" r="2.7" fill="#CDCDC2"/><circle cx="56.5" cy="93.2" r="0.9" fill="#F2F2EC"/><circle cx="21.6" cy="40.9" r="1.9" fill="#D8D8CD"/><circle cx="102.1" cy="107.6" r="1.8" fill="#DCDCD2"/><circle cx="64.3" cy="48.2" r="2.2" fill="#EAEAE2"/><circle cx="66.3" cy="50.2" r="0.6" fill="#ABAC9F"/><circle cx="119.4" cy="78.4" r="1.7" fill="#E0E0D6"/><circle cx="65.1" cy="49.4" r="3.0" fill="#D8D8CD"/><circle cx="93.3" cy="92.4" r="2.0" fill="#E0E0D6"/><circle cx="33.7" cy="40.2" r="2.5" fill="#DCDCD2"/><circle cx="50.4" cy="89.0" r="1.5" fill="#EAEAE2"/><circle cx="50.3" cy="88.3" r="0.9" fill="#F2F2EC"/><circle cx="45.0" cy="117.8" r="2.8" fill="#EAEAE2"/><circle cx="45.1" cy="118.3" r="1.1" fill="#F2F2EC"/><circle cx="82.7" cy="89.0" r="2.8" fill="#E0E0D6"/><circle cx="39.3" cy="85.4" r="2.2" fill="#E4E4DB"/><circle cx="41.3" cy="87.3" r="1.0" fill="#ABAC9F"/><circle cx="48.2" cy="90.7" r="3.1" fill="#D3D3C8"/><circle cx="125.9" cy="98.6" r="2.3" fill="#EAEAE2"/><circle cx="126.4" cy="98.5" r="0.8" fill="#F2F2EC"/><circle cx="65.8" cy="67.5" r="3.2" fill="#CDCDC2"/><circle cx="65.5" cy="67.4" r="0.7" fill="#F2F2EC"/><circle cx="68.7" cy="70.4" r="0.9" fill="#ABAC9F"/><circle cx="27.9" cy="47.9" r="1.9" fill="#E0E0D6"/><circle cx="27.6" cy="47.9" r="0.7" fill="#F2F2EC"/><circle cx="91.4" cy="22.5" r="2.0" fill="#D8D8CD"/><circle cx="124.4" cy="80.2" r="1.5" fill="#E4E4DB"/><circle cx="124.4" cy="80.5" r="0.7" fill="#F2F2EC"/><circle cx="117.7" cy="29.9" r="2.7" fill="#E0E0D6"/><circle cx="118.2" cy="30.6" r="1.1" fill="#F2F2EC"/><circle cx="9.6" cy="113.3" r="2.8" fill="#D3D3C8"/><circle cx="35.0" cy="31.3" r="2.6" fill="#E4E4DB"/><circle cx="108.4" cy="109.6" r="1.8" fill="#E4E4DB"/><circle cx="28.3" cy="46.9" r="2.7" fill="#E4E4DB"/><circle cx="117.0" cy="61.5" r="1.6" fill="#EAEAE2"/><circle cx="118.5" cy="63.0" r="0.9" fill="#ABAC9F"/><circle cx="14.1" cy="104.3" r="2.4" fill="#CDCDC2"/><circle cx="13.9" cy="104.4" r="1.1" fill="#F2F2EC"/><circle cx="75.3" cy="50.6" r="2.8" fill="#EAEAE2"/><circle cx="75.6" cy="50.1" r="0.8" fill="#F2F2EC"/><circle cx="96.4" cy="43.0" r="2.3" fill="#D3D3C8"/><circle cx="95.6" cy="42.6" r="0.7" fill="#F2F2EC"/><circle cx="53.4" cy="54.1" r="1.8" fill="#E4E4DB"/><circle cx="53.9" cy="54.1" r="1.0" fill="#F2F2EC"/><circle cx="121.3" cy="94.0" r="2.6" fill="#E0E0D6"/><circle cx="37.7" cy="101.4" r="2.1" fill="#D3D3C8"/><circle cx="75.3" cy="98.1" r="3.0" fill="#E4E4DB"/><circle cx="75.0" cy="97.9" r="1.0" fill="#F2F2EC"/><circle cx="78.0" cy="100.8" r="0.8" fill="#ABAC9F"/><circle cx="73.8" cy="48.4" r="3.1" fill="#CDCDC2"/><circle cx="102.8" cy="58.6" r="2.2" fill="#CDCDC2"/><circle cx="102.9" cy="58.9" r="1.1" fill="#F2F2EC"/><circle cx="104.7" cy="60.6" r="0.7" fill="#ABAC9F"/><circle cx="75.5" cy="44.6" r="2.2" fill="#CDCDC2"/><circle cx="76.0" cy="44.7" r="1.2" fill="#F2F2EC"/><circle cx="77.5" cy="46.6" r="1.1" fill="#ABAC9F"/><circle cx="56.6" cy="80.5" r="1.7" fill="#CDCDC2"/><circle cx="82.9" cy="69.5" r="1.6" fill="#E0E0D6"/><circle cx="82.8" cy="70.1" r="1.0" fill="#F2F2EC"/><circle cx="84.3" cy="70.9" r="0.8" fill="#ABAC9F"/><circle cx="76.7" cy="44.7" r="2.5" fill="#E0E0D6"/><circle cx="78.9" cy="47.0" r="1.0" fill="#ABAC9F"/><circle cx="126.2" cy="76.3" r="1.9" fill="#D3D3C8"/><circle cx="126.9" cy="76.4" r="0.8" fill="#F2F2EC"/><circle cx="40.1" cy="101.1" r="2.7" fill="#D8D8CD"/><circle cx="39.8" cy="101.5" r="1.1" fill="#F2F2EC"/><circle cx="88.5" cy="92.3" r="3.0" fill="#E0E0D6"/><circle cx="39.7" cy="102.7" r="1.8" fill="#E0E0D6"/><circle cx="38.9" cy="103.0" r="1.1" fill="#F2F2EC"/><circle cx="120.3" cy="82.5" r="2.2" fill="#E0E0D6"/><circle cx="120.3" cy="83.2" r="0.8" fill="#F2F2EC"/><circle cx="125.3" cy="84.6" r="1.6" fill="#E4E4DB"/><circle cx="127.7" cy="83.5" r="1.7" fill="#E0E0D6"/><circle cx="55.8" cy="89.7" r="2.3" fill="#DCDCD2"/><circle cx="21.9" cy="34.9" r="1.7" fill="#D3D3C8"/><circle cx="48.9" cy="22.5" r="2.5" fill="#CDCDC2"/><circle cx="48.9" cy="22.5" r="1.1" fill="#F2F2EC"/><circle cx="37.1" cy="27.4" r="2.7" fill="#DCDCD2"/><circle cx="22.9" cy="50.3" r="1.9" fill="#EAEAE2"/><circle cx="104.9" cy="90.2" r="1.6" fill="#D8D8CD"/><circle cx="104.6" cy="90.4" r="1.1" fill="#F2F2EC"/><circle cx="90.1" cy="22.1" r="2.7" fill="#E4E4DB"/><circle cx="125.1" cy="9.4" r="1.7" fill="#D3D3C8"/><circle cx="125.0" cy="9.3" r="0.7" fill="#F2F2EC"/><circle cx="15.2" cy="102.5" r="2.8" fill="#EAEAE2"/><circle cx="15.3" cy="102.5" r="0.9" fill="#F2F2EC"/><circle cx="11.2" cy="77.6" r="1.8" fill="#D3D3C8"/><circle cx="108.5" cy="105.5" r="2.0" fill="#D3D3C8"/><circle cx="110.3" cy="107.3" r="0.8" fill="#ABAC9F"/><circle cx="98.0" cy="48.9" r="2.7" fill="#E0E0D6"/><circle cx="97.7" cy="48.6" r="1.1" fill="#F2F2EC"/><circle cx="96.9" cy="114.1" r="1.8" fill="#EAEAE2"/><circle cx="38.7" cy="70.8" r="1.7" fill="#EAEAE2"/><circle cx="84.7" cy="118.1" r="3.0" fill="#CDCDC2"/><circle cx="36.4" cy="62.0" r="2.0" fill="#CDCDC2"/><circle cx="36.3" cy="62.1" r="0.8" fill="#F2F2EC"/><circle cx="14.1" cy="79.2" r="2.0" fill="#D3D3C8"/><circle cx="40.8" cy="83.8" r="3.0" fill="#DCDCD2"/><circle cx="40.6" cy="84.1" r="0.8" fill="#F2F2EC"/><circle cx="31.8" cy="70.7" r="2.1" fill="#DCDCD2"/><circle cx="32.1" cy="70.9" r="1.0" fill="#F2F2EC"/><circle cx="62.1" cy="113.5" r="2.9" fill="#E4E4DB"/><circle cx="127.6" cy="54.7" r="2.0" fill="#EAEAE2"/><circle cx="127.9" cy="55.1" r="1.0" fill="#F2F2EC"/><circle cx="124.9" cy="82.3" r="3.1" fill="#E4E4DB"/><circle cx="127.7" cy="85.2" r="0.6" fill="#ABAC9F"/><circle cx="59.8" cy="26.6" r="2.7" fill="#CDCDC2"/><circle cx="90.0" cy="48.6" r="3.1" fill="#E4E4DB"/><circle cx="94.9" cy="69.6" r="3.0" fill="#D3D3C8"/><circle cx="97.6" cy="72.3" r="0.9" fill="#ABAC9F"/><circle cx="67.9" cy="16.9" r="2.5" fill="#D8D8CD"/><circle cx="67.9" cy="16.3" r="1.0" fill="#F2F2EC"/><circle cx="50.8" cy="19.2" r="2.6" fill="#E0E0D6"/><circle cx="89.0" cy="33.4" r="1.6" fill="#CDCDC2"/><circle cx="106.7" cy="79.7" r="2.3" fill="#DCDCD2"/><circle cx="68.7" cy="112.4" r="1.8" fill="#D3D3C8"/><circle cx="68.1" cy="112.5" r="1.0" fill="#F2F2EC"/><circle cx="109.1" cy="39.2" r="2.3" fill="#CDCDC2"/><circle cx="126.8" cy="85.5" r="3.0" fill="#DCDCD2"/><circle cx="129.5" cy="88.2" r="0.8" fill="#ABAC9F"/><circle cx="16.3" cy="85.0" r="1.8" fill="#E4E4DB"/><circle cx="17.9" cy="86.6" r="0.7" fill="#ABAC9F"/><circle cx="25.3" cy="81.7" r="2.0" fill="#EAEAE2"/><circle cx="27.1" cy="83.5" r="0.6" fill="#ABAC9F"/><circle cx="121.2" cy="62.0" r="1.7" fill="#E4E4DB"/><circle cx="121.8" cy="62.4" r="1.0" fill="#F2F2EC"/><circle cx="122.7" cy="63.5" r="0.8" fill="#ABAC9F"/><circle cx="42.6" cy="10.7" r="2.7" fill="#EAEAE2"/><circle cx="45.0" cy="13.2" r="0.6" fill="#ABAC9F"/><circle cx="90.8" cy="60.5" r="3.0" fill="#D8D8CD"/><circle cx="124.5" cy="26.1" r="2.3" fill="#D3D3C8"/><circle cx="126.6" cy="28.2" r="0.9" fill="#ABAC9F"/><circle cx="15.6" cy="114.0" r="3.1" fill="#CDCDC2"/><circle cx="14.9" cy="113.8" r="1.2" fill="#F2F2EC"/><circle cx="112.1" cy="33.2" r="2.9" fill="#CDCDC2"/><circle cx="38.3" cy="70.1" r="2.0" fill="#E4E4DB"/><circle cx="37.5" cy="84.6" r="3.0" fill="#E0E0D6"/><circle cx="36.8" cy="84.6" r="0.8" fill="#F2F2EC"/><circle cx="60.7" cy="104.9" r="2.3" fill="#E4E4DB"/><circle cx="62.8" cy="107.0" r="1.1" fill="#ABAC9F"/><circle cx="84.7" cy="20.2" r="2.7" fill="#CDCDC2"/><circle cx="113.9" cy="98.6" r="2.8" fill="#EAEAE2"/><circle cx="54.7" cy="53.4" r="2.1" fill="#E0E0D6"/><circle cx="54.6" cy="53.5" r="0.8" fill="#F2F2EC"/><circle cx="26.0" cy="38.9" r="2.7" fill="#DCDCD2"/><circle cx="25.7" cy="38.3" r="1.1" fill="#F2F2EC"/><circle cx="45.4" cy="49.6" r="1.7" fill="#E4E4DB"/><circle cx="87.9" cy="68.0" r="2.8" fill="#EAEAE2"/><circle cx="88.5" cy="67.8" r="0.9" fill="#F2F2EC"/><circle cx="90.4" cy="70.6" r="0.7" fill="#ABAC9F"/><circle cx="61.2" cy="37.8" r="2.7" fill="#DCDCD2"/><circle cx="61.3" cy="38.3" r="0.9" fill="#F2F2EC"/><circle cx="63.7" cy="40.3" r="0.8" fill="#ABAC9F"/><circle cx="16.8" cy="93.3" r="2.4" fill="#E4E4DB"/><circle cx="47.5" cy="9.1" r="2.2" fill="#D3D3C8"/><circle cx="46.9" cy="9.3" r="1.1" fill="#F2F2EC"/><circle cx="22.0" cy="45.3" r="2.6" fill="#E4E4DB"/><circle cx="24.4" cy="47.6" r="0.6" fill="#ABAC9F"/><circle cx="59.4" cy="23.4" r="3.2" fill="#CDCDC2"/><circle cx="59.0" cy="22.8" r="0.9" fill="#F2F2EC"/><circle cx="62.2" cy="26.3" r="0.7" fill="#ABAC9F"/><circle cx="46.6" cy="19.1" r="2.4" fill="#D8D8CD"/><circle cx="98.7" cy="86.3" r="2.5" fill="#D8D8CD"/><circle cx="112.4" cy="93.0" r="3.0" fill="#D8D8CD"/><circle cx="112.3" cy="92.9" r="1.0" fill="#F2F2EC"/><circle cx="107.2" cy="44.1" r="2.9" fill="#D8D8CD"/><circle cx="55.2" cy="111.8" r="1.9" fill="#D3D3C8"/><circle cx="55.6" cy="111.9" r="1.0" fill="#F2F2EC"/><circle cx="73.7" cy="29.0" r="2.3" fill="#D3D3C8"/><circle cx="73.6" cy="29.1" r="1.0" fill="#F2F2EC"/><circle cx="76.1" cy="62.8" r="3.1" fill="#E4E4DB"/><circle cx="26.6" cy="102.5" r="3.2" fill="#E4E4DB"/><circle cx="70.3" cy="74.1" r="2.6" fill="#D3D3C8"/><circle cx="69.9" cy="74.8" r="1.2" fill="#F2F2EC"/><circle cx="22.6" cy="46.6" r="1.9" fill="#E0E0D6"/><circle cx="51.2" cy="118.3" r="1.5" fill="#D8D8CD"/><circle cx="95.1" cy="88.9" r="2.1" fill="#CDCDC2"/><circle cx="96.9" cy="90.8" r="0.9" fill="#ABAC9F"/><circle cx="79.1" cy="114.6" r="2.4" fill="#EAEAE2"/><circle cx="51.6" cy="14.6" r="1.9" fill="#DCDCD2"/><circle cx="51.0" cy="14.8" r="1.1" fill="#F2F2EC"/><circle cx="28.9" cy="17.4" r="1.5" fill="#D8D8CD"/><circle cx="30.3" cy="18.8" r="1.0" fill="#ABAC9F"/><circle cx="55.2" cy="60.5" r="1.7" fill="#D8D8CD"/><circle cx="55.1" cy="60.2" r="0.9" fill="#F2F2EC"/><circle cx="40.0" cy="100.6" r="3.1" fill="#CDCDC2"/><circle cx="40.1" cy="100.0" r="1.1" fill="#F2F2EC"/><circle cx="126.9" cy="31.4" r="2.3" fill="#EAEAE2"/><circle cx="127.0" cy="31.1" r="0.7" fill="#F2F2EC"/><circle cx="44.4" cy="112.7" r="2.9" fill="#EAEAE2"/><circle cx="112.5" cy="13.4" r="1.9" fill="#E0E0D6"/><circle cx="71.0" cy="96.4" r="2.0" fill="#D3D3C8"/><circle cx="79.5" cy="39.3" r="1.5" fill="#E0E0D6"/><circle cx="79.6" cy="39.8" r="0.7" fill="#F2F2EC"/><circle cx="26.4" cy="33.0" r="2.9" fill="#CDCDC2"/><circle cx="27.0" cy="32.8" r="0.9" fill="#F2F2EC"/><circle cx="108.1" cy="70.7" r="2.3" fill="#D3D3C8"/><circle cx="96.7" cy="97.9" r="1.7" fill="#D3D3C8"/><circle cx="81.3" cy="67.0" r="2.9" fill="#D8D8CD"/><circle cx="113.4" cy="68.4" r="2.4" fill="#DCDCD2"/><circle cx="115.6" cy="70.6" r="0.6" fill="#ABAC9F"/><circle cx="81.5" cy="110.9" r="2.0" fill="#D8D8CD"/><circle cx="83.3" cy="112.7" r="0.9" fill="#ABAC9F"/><circle cx="112.5" cy="55.9" r="2.1" fill="#E0E0D6"/><circle cx="107.0" cy="118.3" r="2.2" fill="#EAEAE2"/><circle cx="108.9" cy="120.3" r="1.1" fill="#ABAC9F"/><circle cx="68.3" cy="44.9" r="1.7" fill="#EAEAE2"/><circle cx="69.8" cy="46.4" r="0.8" fill="#ABAC9F"/><circle cx="41.5" cy="84.3" r="1.7" fill="#D3D3C8"/><circle cx="74.2" cy="20.7" r="2.0" fill="#DCDCD2"/><circle cx="113.8" cy="31.9" r="1.9" fill="#EAEAE2"/><circle cx="97.5" cy="82.5" r="2.0" fill="#E0E0D6"/><circle cx="96.8" cy="82.0" r="1.1" fill="#F2F2EC"/><circle cx="11.4" cy="33.0" r="1.9" fill="#D8D8CD"/><circle cx="12.0" cy="33.0" r="0.9" fill="#F2F2EC"/><circle cx="123.8" cy="73.5" r="1.7" fill="#D3D3C8"/><circle cx="41.3" cy="67.0" r="2.6" fill="#D3D3C8"/><circle cx="43.6" cy="69.3" r="0.7" fill="#ABAC9F"/><circle cx="102.7" cy="18.7" r="1.6" fill="#E0E0D6"/><circle cx="112.7" cy="71.9" r="1.6" fill="#E0E0D6"/><circle cx="13.7" cy="51.4" r="2.4" fill="#D8D8CD"/><circle cx="93.8" cy="83.5" r="2.7" fill="#D3D3C8"/><circle cx="94.6" cy="83.9" r="0.9" fill="#F2F2EC"/><circle cx="58.7" cy="116.3" r="1.8" fill="#EAEAE2"/><circle cx="57.7" cy="33.9" r="1.9" fill="#E4E4DB"/><circle cx="82.8" cy="20.8" r="2.9" fill="#E0E0D6"/><circle cx="101.1" cy="77.4" r="2.1" fill="#D3D3C8"/><circle cx="77.4" cy="11.2" r="2.3" fill="#EAEAE2"/><circle cx="85.9" cy="80.3" r="3.0" fill="#CDCDC2"/><circle cx="88.5" cy="83.0" r="0.9" fill="#ABAC9F"/><circle cx="48.1" cy="63.0" r="2.3" fill="#E4E4DB"/><circle cx="122.6" cy="51.8" r="1.5" fill="#D3D3C8"/><circle cx="124.0" cy="53.2" r="0.9" fill="#ABAC9F"/><circle cx="47.1" cy="12.6" r="3.0" fill="#CDCDC2"/><circle cx="47.0" cy="12.0" r="1.0" fill="#F2F2EC"/><circle cx="110.3" cy="45.1" r="3.2" fill="#E4E4DB"/><circle cx="48.2" cy="66.8" r="2.2" fill="#E0E0D6"/><circle cx="48.2" cy="66.8" r="0.8" fill="#F2F2EC"/><circle cx="14.5" cy="46.2" r="2.0" fill="#D8D8CD"/><circle cx="46.4" cy="49.5" r="2.1" fill="#E4E4DB"/><circle cx="26.5" cy="71.9" r="2.6" fill="#CDCDC2"/><circle cx="13.7" cy="57.0" r="2.9" fill="#E0E0D6"/><circle cx="34.4" cy="40.7" r="2.5" fill="#D3D3C8"/><circle cx="79.1" cy="29.7" r="2.8" fill="#E0E0D6"/><circle cx="79.6" cy="29.0" r="1.0" fill="#F2F2EC"/><circle cx="81.6" cy="32.2" r="0.6" fill="#ABAC9F"/><circle cx="99.2" cy="67.2" r="1.5" fill="#D8D8CD"/><circle cx="99.8" cy="67.6" r="1.1" fill="#F2F2EC"/><circle cx="70.4" cy="57.9" r="2.0" fill="#E0E0D6"/><circle cx="94.1" cy="18.7" r="2.7" fill="#E0E0D6"/><circle cx="115.3" cy="19.9" r="2.4" fill="#D8D8CD"/><circle cx="115.0" cy="20.5" r="0.9" fill="#F2F2EC"/><circle cx="53.7" cy="27.5" r="1.5" fill="#DCDCD2"/><circle cx="82.6" cy="12.4" r="1.8" fill="#DCDCD2"/><circle cx="41.3" cy="15.0" r="1.5" fill="#D8D8CD"/><circle cx="41.3" cy="14.8" r="0.9" fill="#F2F2EC"/><circle cx="46.8" cy="102.6" r="2.4" fill="#DCDCD2"/><circle cx="86.5" cy="65.7" r="1.9" fill="#E4E4DB"/><circle cx="86.8" cy="66.3" r="1.1" fill="#F2F2EC"/><circle cx="125.0" cy="114.0" r="2.4" fill="#DCDCD2"/><circle cx="34.1" cy="25.1" r="2.7" fill="#DCDCD2"/><circle cx="16.7" cy="47.0" r="1.8" fill="#EAEAE2"/><circle cx="17.3" cy="46.6" r="0.9" fill="#F2F2EC"/><circle cx="22.3" cy="16.7" r="2.8" fill="#EAEAE2"/><circle cx="57.1" cy="98.5" r="1.5" fill="#CDCDC2"/><circle cx="64.4" cy="21.8" r="2.3" fill="#E4E4DB"/><circle cx="64.9" cy="21.3" r="1.2" fill="#F2F2EC"/><circle cx="50.7" cy="106.5" r="2.4" fill="#DCDCD2"/><circle cx="120.5" cy="51.0" r="3.2" fill="#E4E4DB"/><circle cx="120.5" cy="51.1" r="1.2" fill="#F2F2EC"/><circle cx="67.2" cy="45.9" r="2.9" fill="#D8D8CD"/><circle cx="69.9" cy="48.5" r="0.9" fill="#ABAC9F"/><circle cx="23.8" cy="20.8" r="2.5" fill="#E0E0D6"/><circle cx="83.7" cy="74.1" r="2.3" fill="#EAEAE2"/><circle cx="85.7" cy="76.1" r="1.0" fill="#ABAC9F"/><circle cx="94.6" cy="100.4" r="2.3" fill="#E4E4DB"/><circle cx="110.8" cy="30.5" r="2.1" fill="#DCDCD2"/><circle cx="63.1" cy="21.0" r="2.0" fill="#D8D8CD"/><circle cx="104.4" cy="109.1" r="3.1" fill="#D3D3C8"/><circle cx="104.5" cy="109.9" r="1.1" fill="#F2F2EC"/><circle cx="86.6" cy="70.5" r="2.4" fill="#D3D3C8"/><circle cx="88.7" cy="72.7" r="0.8" fill="#ABAC9F"/><circle cx="112.3" cy="92.2" r="3.0" fill="#EAEAE2"/><circle cx="86.8" cy="102.1" r="2.7" fill="#E0E0D6"/><circle cx="86.2" cy="101.5" r="0.9" fill="#F2F2EC"/><circle cx="89.2" cy="104.5" r="1.0" fill="#ABAC9F"/><circle cx="85.3" cy="107.3" r="2.4" fill="#E4E4DB"/><circle cx="86.0" cy="116.4" r="2.5" fill="#CDCDC2"/><circle cx="85.5" cy="116.3" r="1.1" fill="#F2F2EC"/><circle cx="82.8" cy="35.6" r="1.6" fill="#CDCDC2"/><circle cx="83.4" cy="35.6" r="0.9" fill="#F2F2EC"/><circle cx="84.3" cy="37.0" r="0.8" fill="#ABAC9F"/><circle cx="18.1" cy="102.7" r="2.2" fill="#E0E0D6"/><circle cx="18.2" cy="102.3" r="1.0" fill="#F2F2EC"/><circle cx="103.1" cy="38.0" r="2.5" fill="#D3D3C8"/><circle cx="102.6" cy="38.4" r="1.1" fill="#F2F2EC"/><circle cx="105.4" cy="40.3" r="0.9" fill="#ABAC9F"/><circle cx="27.9" cy="70.7" r="1.5" fill="#D8D8CD"/><circle cx="20.7" cy="9.7" r="2.5" fill="#E4E4DB"/><circle cx="20.2" cy="10.0" r="1.1" fill="#F2F2EC"/><circle cx="30.6" cy="109.4" r="1.5" fill="#E0E0D6"/><circle cx="84.5" cy="115.4" r="2.6" fill="#CDCDC2"/><circle cx="86.8" cy="117.7" r="0.9" fill="#ABAC9F"/><circle cx="57.0" cy="24.6" r="3.0" fill="#E0E0D6"/><circle cx="56.8" cy="24.5" r="1.1" fill="#F2F2EC"/><circle cx="73.3" cy="76.5" r="2.4" fill="#E0E0D6"/><circle cx="73.8" cy="76.6" r="0.8" fill="#F2F2EC"/><circle cx="46.6" cy="17.6" r="3.1" fill="#DCDCD2"/><circle cx="65.0" cy="26.0" r="2.8" fill="#DCDCD2"/><circle cx="92.0" cy="26.1" r="2.7" fill="#CDCDC2"/><circle cx="87.2" cy="61.7" r="2.5" fill="#D3D3C8"/><circle cx="74.4" cy="37.6" r="1.7" fill="#D3D3C8"/><circle cx="105.9" cy="39.0" r="2.1" fill="#EAEAE2"/><circle cx="77.4" cy="47.0" r="1.7" fill="#CDCDC2"/><circle cx="86.8" cy="50.4" r="1.6" fill="#DCDCD2"/><circle cx="87.2" cy="50.9" r="0.8" fill="#F2F2EC"/><circle cx="114.9" cy="84.3" r="2.1" fill="#D8D8CD"/><circle cx="116.8" cy="86.2" r="0.9" fill="#ABAC9F"/><circle cx="97.5" cy="55.5" r="3.1" fill="#EAEAE2"/><circle cx="86.6" cy="40.2" r="1.5" fill="#E4E4DB"/><circle cx="87.0" cy="39.6" r="1.0" fill="#F2F2EC"/><circle cx="17.5" cy="106.4" r="1.5" fill="#E4E4DB"/><circle cx="88.9" cy="59.3" r="1.8" fill="#D3D3C8"/><circle cx="108.1" cy="77.4" r="3.2" fill="#D8D8CD"/><circle cx="83.9" cy="43.2" r="3.1" fill="#CDCDC2"/><circle cx="72.9" cy="74.6" r="3.1" fill="#E4E4DB"/><circle cx="26.7" cy="32.4" r="2.2" fill="#EAEAE2"/><circle cx="66.6" cy="80.3" r="2.6" fill="#D8D8CD"/><circle cx="66.8" cy="80.6" r="1.1" fill="#F2F2EC"/><circle cx="85.0" cy="78.5" r="2.2" fill="#EAEAE2"/><circle cx="24.8" cy="112.9" r="2.2" fill="#E4E4DB"/><circle cx="112.4" cy="37.5" r="1.5" fill="#E4E4DB"/><circle cx="113.8" cy="38.9" r="0.8" fill="#ABAC9F"/><circle cx="95.0" cy="51.2" r="2.3" fill="#D8D8CD"/><circle cx="117.1" cy="74.7" r="3.0" fill="#E0E0D6"/><circle cx="53.0" cy="90.1" r="2.2" fill="#EAEAE2"/><circle cx="55.0" cy="92.0" r="0.8" fill="#ABAC9F"/><circle cx="110.7" cy="37.3" r="2.5" fill="#DCDCD2"/><circle cx="112.9" cy="39.5" r="0.8" fill="#ABAC9F"/><circle cx="57.7" cy="17.0" r="1.5" fill="#CDCDC2"/><circle cx="58.3" cy="16.3" r="0.8" fill="#F2F2EC"/><circle cx="31.5" cy="79.0" r="1.9" fill="#E0E0D6"/><circle cx="33.2" cy="80.7" r="0.6" fill="#ABAC9F"/><circle cx="16.9" cy="69.0" r="1.8" fill="#D3D3C8"/><circle cx="48.6" cy="59.5" r="3.0" fill="#CDCDC2"/><circle cx="76.0" cy="87.9" r="2.9" fill="#D8D8CD"/><circle cx="78.6" cy="90.6" r="1.0" fill="#ABAC9F"/><circle cx="117.6" cy="14.7" r="1.9" fill="#CDCDC2"/><circle cx="112.0" cy="116.5" r="2.3" fill="#D8D8CD"/><circle cx="112.8" cy="116.1" r="0.9" fill="#F2F2EC"/><circle cx="48.4" cy="53.1" r="1.6" fill="#D8D8CD"/><circle cx="68.6" cy="65.4" r="1.8" fill="#E0E0D6"/><circle cx="73.7" cy="89.3" r="2.4" fill="#CDCDC2"/><circle cx="19.7" cy="63.1" r="1.9" fill="#D3D3C8"/><circle cx="16.2" cy="46.9" r="2.5" fill="#DCDCD2"/><circle cx="103.5" cy="21.1" r="2.4" fill="#D3D3C8"/><circle cx="105.7" cy="23.3" r="1.0" fill="#ABAC9F"/><circle cx="92.2" cy="10.4" r="2.8" fill="#DCDCD2"/><circle cx="94.7" cy="12.9" r="0.9" fill="#ABAC9F"/><circle cx="111.2" cy="60.0" r="1.5" fill="#CDCDC2"/><circle cx="30.0" cy="13.0" r="1.8" fill="#CDCDC2"/><circle cx="60.2" cy="80.0" r="2.5" fill="#EAEAE2"/><circle cx="75.1" cy="108.9" r="3.2" fill="#D8D8CD"/><circle cx="123.7" cy="67.3" r="2.5" fill="#DCDCD2"/><circle cx="85.6" cy="69.8" r="2.5" fill="#EAEAE2"/><circle cx="87.9" cy="72.1" r="1.1" fill="#ABAC9F"/><circle cx="66.8" cy="64.8" r="1.6" fill="#CDCDC2"/><circle cx="105.8" cy="100.5" r="2.7" fill="#EAEAE2"/><circle cx="90.7" cy="42.0" r="2.9" fill="#EAEAE2"/><circle cx="91.2" cy="41.9" r="0.8" fill="#F2F2EC"/><circle cx="90.8" cy="68.6" r="2.8" fill="#DCDCD2"/><circle cx="108.8" cy="38.0" r="1.5" fill="#E4E4DB"/><circle cx="108.5" cy="38.7" r="1.0" fill="#F2F2EC"/><circle cx="114.4" cy="26.0" r="2.4" fill="#DCDCD2"/><circle cx="49.3" cy="92.2" r="2.6" fill="#E4E4DB"/><circle cx="91.4" cy="74.4" r="2.3" fill="#EAEAE2"/><circle cx="119.6" cy="26.2" r="2.0" fill="#CDCDC2"/><circle cx="120.1" cy="26.0" r="0.9" fill="#F2F2EC"/><circle cx="50.5" cy="32.1" r="3.0" fill="#CDCDC2"/><circle cx="77.7" cy="35.2" r="2.3" fill="#EAEAE2"/><circle cx="77.8" cy="35.0" r="1.1" fill="#F2F2EC"/><circle cx="79.7" cy="37.2" r="0.8" fill="#ABAC9F"/><circle cx="89.2" cy="58.6" r="2.7" fill="#D8D8CD"/><circle cx="91.6" cy="38.8" r="3.0" fill="#D3D3C8"/><circle cx="31.4" cy="56.1" r="2.2" fill="#DCDCD2"/><circle cx="33.4" cy="58.1" r="0.8" fill="#ABAC9F"/><circle cx="55.2" cy="44.5" r="2.1" fill="#E4E4DB"/><circle cx="55.5" cy="44.2" r="1.1" fill="#F2F2EC"/><circle cx="29.0" cy="113.9" r="1.9" fill="#DCDCD2"/><circle cx="124.8" cy="114.8" r="2.2" fill="#CDCDC2"/><circle cx="126.7" cy="116.8" r="0.9" fill="#ABAC9F"/><circle cx="58.0" cy="47.4" r="3.1" fill="#EAEAE2"/><circle cx="57.9" cy="47.4" r="1.1" fill="#F2F2EC"/><circle cx="25.2" cy="83.6" r="1.9" fill="#CDCDC2"/><circle cx="25.3" cy="84.0" r="0.8" fill="#F2F2EC"/><circle cx="116.8" cy="44.2" r="2.0" fill="#DCDCD2"/><circle cx="128.3" cy="14.4" r="2.1" fill="#E0E0D6"/><circle cx="98.8" cy="104.8" r="2.6" fill="#E0E0D6"/><circle cx="98.5" cy="104.2" r="0.8" fill="#F2F2EC"/><circle cx="101.1" cy="107.1" r="0.6" fill="#ABAC9F"/><circle cx="74.2" cy="94.4" r="1.8" fill="#DCDCD2"/><circle cx="75.3" cy="84.8" r="1.8" fill="#EAEAE2"/><circle cx="74.0" cy="49.1" r="1.5" fill="#D8D8CD"/><circle cx="73.5" cy="49.9" r="1.0" fill="#F2F2EC"/><circle cx="119.5" cy="88.9" r="2.3" fill="#D8D8CD"/><circle cx="76.8" cy="91.5" r="2.5" fill="#EAEAE2"/><circle cx="77.5" cy="91.4" r="1.2" fill="#F2F2EC"/><circle cx="109.5" cy="51.1" r="2.0" fill="#E4E4DB"/><circle cx="43.8" cy="51.3" r="1.5" fill="#DCDCD2"/><circle cx="107.6" cy="40.8" r="3.2" fill="#DCDCD2"/><circle cx="19.6" cy="56.5" r="2.5" fill="#EAEAE2"/><circle cx="20.3" cy="56.4" r="1.0" fill="#F2F2EC"/><circle cx="69.6" cy="32.5" r="2.9" fill="#E0E0D6"/><circle cx="70.0" cy="31.9" r="0.9" fill="#F2F2EC"/><circle cx="85.3" cy="91.6" r="2.8" fill="#E0E0D6"/><circle cx="66.9" cy="37.0" r="2.4" fill="#E0E0D6"/><circle cx="66.3" cy="37.2" r="0.9" fill="#F2F2EC"/><circle cx="11.9" cy="100.5" r="2.8" fill="#D3D3C8"/><circle cx="29.3" cy="28.3" r="2.9" fill="#CDCDC2"/><circle cx="98.3" cy="51.0" r="3.1" fill="#EAEAE2"/><circle cx="101.1" cy="53.8" r="0.9" fill="#ABAC9F"/><circle cx="65.8" cy="24.6" r="2.0" fill="#E4E4DB"/><circle cx="123.5" cy="12.1" r="1.9" fill="#E0E0D6"/><circle cx="65.3" cy="114.4" r="2.6" fill="#EAEAE2"/><circle cx="111.0" cy="118.0" r="2.0" fill="#DCDCD2"/><circle cx="21.2" cy="92.8" r="1.8" fill="#D8D8CD"/><circle cx="22.8" cy="94.4" r="1.0" fill="#ABAC9F"/><circle cx="79.4" cy="79.3" r="2.1" fill="#DCDCD2"/><circle cx="35.9" cy="14.6" r="2.9" fill="#D8D8CD"/><circle cx="56.7" cy="61.7" r="2.9" fill="#D3D3C8"/><circle cx="102.1" cy="49.3" r="1.9" fill="#EAEAE2"/><circle cx="101.4" cy="49.8" r="1.2" fill="#F2F2EC"/><circle cx="79.6" cy="15.0" r="2.8" fill="#E0E0D6"/><circle cx="64.1" cy="60.2" r="1.5" fill="#EAEAE2"/><circle cx="108.5" cy="74.3" r="3.1" fill="#D3D3C8"/><circle cx="119.2" cy="96.1" r="2.0" fill="#EAEAE2"/><circle cx="78.6" cy="90.4" r="2.8" fill="#E4E4DB"/><circle cx="43.6" cy="14.7" r="3.1" fill="#D8D8CD"/><circle cx="24.3" cy="104.2" r="2.6" fill="#EAEAE2"/><circle cx="24.2" cy="104.8" r="1.0" fill="#F2F2EC"/><circle cx="62.7" cy="30.2" r="2.6" fill="#CDCDC2"/><circle cx="15.1" cy="71.2" r="2.4" fill="#D3D3C8"/><circle cx="15.2" cy="71.3" r="0.8" fill="#F2F2EC"/><circle cx="31.1" cy="56.3" r="2.1" fill="#E4E4DB"/><circle cx="54.9" cy="79.4" r="2.5" fill="#D8D8CD"/><circle cx="52.6" cy="36.5" r="2.6" fill="#E4E4DB"/><circle cx="93.5" cy="117.2" r="2.8" fill="#CDCDC2"/><circle cx="50.3" cy="42.8" r="1.6" fill="#DCDCD2"/><circle cx="80.9" cy="55.9" r="2.0" fill="#CDCDC2"/><circle cx="67.5" cy="81.4" r="1.5" fill="#D3D3C8"/><circle cx="67.7" cy="81.6" r="1.1" fill="#F2F2EC"/><circle cx="28.0" cy="79.3" r="2.8" fill="#D3D3C8"/><circle cx="28.5" cy="79.4" r="1.1" fill="#F2F2EC"/><circle cx="79.6" cy="25.2" r="1.7" fill="#DCDCD2"/><circle cx="99.7" cy="77.7" r="2.2" fill="#DCDCD2"/><circle cx="99.1" cy="78.3" r="0.8" fill="#F2F2EC"/><circle cx="82.0" cy="52.1" r="2.1" fill="#E4E4DB"/><circle cx="102.7" cy="15.1" r="2.6" fill="#DCDCD2"/><circle cx="31.6" cy="59.1" r="1.5" fill="#CDCDC2"/><circle cx="57.8" cy="87.7" r="2.5" fill="#EAEAE2"/><circle cx="97.4" cy="11.2" r="2.9" fill="#EAEAE2"/><circle cx="97.2" cy="11.9" r="0.7" fill="#F2F2EC"/><circle cx="62.0" cy="87.2" r="3.1" fill="#E0E0D6"/><circle cx="30.3" cy="26.0" r="2.4" fill="#E0E0D6"/><circle cx="83.8" cy="69.0" r="1.7" fill="#D3D3C8"/><circle cx="33.6" cy="41.6" r="2.5" fill="#CDCDC2"/><circle cx="69.1" cy="35.0" r="2.0" fill="#EAEAE2"/><circle cx="69.7" cy="35.7" r="0.8" fill="#F2F2EC"/><circle cx="55.8" cy="47.6" r="2.0" fill="#DCDCD2"/><circle cx="47.5" cy="91.5" r="2.3" fill="#E4E4DB"/><circle cx="51.9" cy="93.8" r="2.8" fill="#D3D3C8"/><circle cx="51.3" cy="94.3" r="1.1" fill="#F2F2EC"/><circle cx="68.1" cy="99.0" r="1.6" fill="#CDCDC2"/><circle cx="96.0" cy="92.4" r="2.7" fill="#D8D8CD"/><circle cx="77.5" cy="68.0" r="3.1" fill="#D3D3C8"/><circle cx="76.8" cy="68.1" r="0.8" fill="#F2F2EC"/><path d="M44 42 Q60 30 84 34 T112 40 Q100 50 78 47 T44 42Z" fill="#E6E7E0" opacity=".75"/><path d="M131.3 12v94" stroke="#77756F" stroke-width="1.3" opacity=".75"/></svg>
<svg style="left:0;top:0" width="2818" height="1372" viewBox="0 0 2818 1372"><rect x="659.7" y="904.2" width="14.2" height="30.3" rx="3.9" ry="2.5" fill="#E2E2E2"/><rect x="661.4" y="906.0" width="4.3" height="26.7" fill="#EDEDED"/><rect x="667.5" y="907.2" width="4.3" height="15.2" fill="#D9D9D9"/><circle cx="663.2" cy="928.4" r="1.8" fill="#F3F3F3"/><rect x="688.1" y="904.2" width="14.2" height="30.3" rx="3.9" ry="2.5" fill="#E2E2E2"/><rect x="689.8" y="906.0" width="4.3" height="26.7" fill="#EDEDED"/><rect x="695.9" y="907.2" width="4.3" height="15.2" fill="#D9D9D9"/><circle cx="691.6" cy="928.4" r="1.8" fill="#F3F3F3"/><rect x="717.2" y="904.2" width="14.2" height="30.3" rx="3.9" ry="2.5" fill="#E2E2E2"/><rect x="718.9" y="906.0" width="4.3" height="26.7" fill="#EDEDED"/><rect x="725.0" y="907.2" width="4.3" height="15.2" fill="#D9D9D9"/><circle cx="720.8" cy="928.4" r="1.8" fill="#F3F3F3"/><rect x="745.8" y="904.2" width="14.2" height="30.3" rx="3.9" ry="2.5" fill="#E2E2E2"/><rect x="747.5" y="906.0" width="4.3" height="26.7" fill="#EDEDED"/><rect x="753.6" y="907.2" width="4.3" height="15.2" fill="#D9D9D9"/><circle cx="749.3" cy="928.4" r="1.8" fill="#F3F3F3"/><rect x="688.1" y="953.3" width="14.2" height="30.3" rx="3.9" ry="2.5" fill="#E2E2E2"/><rect x="689.8" y="955.1" width="4.3" height="26.7" fill="#EDEDED"/><rect x="695.9" y="956.3" width="4.3" height="15.2" fill="#D9D9D9"/><circle cx="691.6" cy="977.5" r="1.8" fill="#F3F3F3"/><rect x="717.2" y="953.3" width="14.2" height="30.3" rx="3.9" ry="2.5" fill="#E2E2E2"/><rect x="718.9" y="955.1" width="4.3" height="26.7" fill="#EDEDED"/><rect x="725.0" y="956.3" width="4.3" height="15.2" fill="#D9D9D9"/><circle cx="720.8" cy="977.5" r="1.8" fill="#F3F3F3"/><rect x="745.8" y="953.3" width="14.2" height="30.3" rx="3.9" ry="2.5" fill="#E2E2E2"/><rect x="747.5" y="955.1" width="4.3" height="26.7" fill="#EDEDED"/><rect x="753.6" y="956.3" width="4.3" height="15.2" fill="#D9D9D9"/><circle cx="749.3" cy="977.5" r="1.8" fill="#F3F3F3"/><rect x="659.7" y="1003.1" width="14.2" height="30.3" rx="3.9" ry="2.5" fill="#E2E2E2"/><rect x="661.4" y="1004.9" width="4.3" height="26.7" fill="#EDEDED"/><rect x="667.5" y="1006.1" width="4.3" height="15.2" fill="#D9D9D9"/><circle cx="663.2" cy="1027.3" r="1.8" fill="#F3F3F3"/><rect x="688.1" y="1003.1" width="14.2" height="30.3" rx="3.9" ry="2.5" fill="#E2E2E2"/><rect x="689.8" y="1004.9" width="4.3" height="26.7" fill="#EDEDED"/><rect x="695.9" y="1006.1" width="4.3" height="15.2" fill="#D9D9D9"/><circle cx="691.6" cy="1027.3" r="1.8" fill="#F3F3F3"/><rect x="649.8" y="937.6" width="30.2" height="62.4" rx="8.3" ry="5.3" fill="#E2E2E2"/><rect x="653.4" y="941.3" width="9.1" height="54.9" fill="#EDEDED"/><rect x="666.4" y="943.8" width="9.1" height="31.2" fill="#D9D9D9"/><circle cx="657.3" cy="987.5" r="3.9" fill="#F3F3F3"/><defs><clipPath id="bedc"><circle cx="738.2" cy="1013" r="20.4"/></clipPath></defs>
<g clip-path="url(#bedc)"><rect x="716" y="990" width="46" height="46" fill="#E9D6BC"/><rect x="716" y="990" width="46" height="17" fill="#E6D2CF"/>
<rect x="721" y="1009" width="36" height="22" fill="#C6CBD4"/><rect x="723" y="1003" width="13" height="7" fill="#F1EEEC"/><path d="M737 1001l14-1 3 9-15 2z" fill="#F6F5F3"/></g></svg>
<svg style="left:0;top:1346px" width="26" height="26" viewBox="0 0 26 26"><path d="M0 0H2.5V6A20 20 0 0 0 22.5 26H0Z" fill="#0A1420"/><path d="M3.2 0V6A19.3 19.3 0 0 0 22.5 25.3" fill="none" stroke="#8995AA" stroke-width="1.5"/><path d="M2.2 0V6A20.3 20.3 0 0 0 22.5 26.3" fill="none" stroke="#000" stroke-width="1.2"/></svg>
<svg style="left:2804px;top:1358px" width="14" height="14" viewBox="0 0 14 14"><path d="M14 4.5A14 14 0 0 1 4.5 14H14Z" fill="#6B2516"/><path d="M14 4.5A14 14 0 0 1 4.5 14" fill="none" stroke="#0A0504" stroke-width="1.3"/></svg>
</div></body></html>
